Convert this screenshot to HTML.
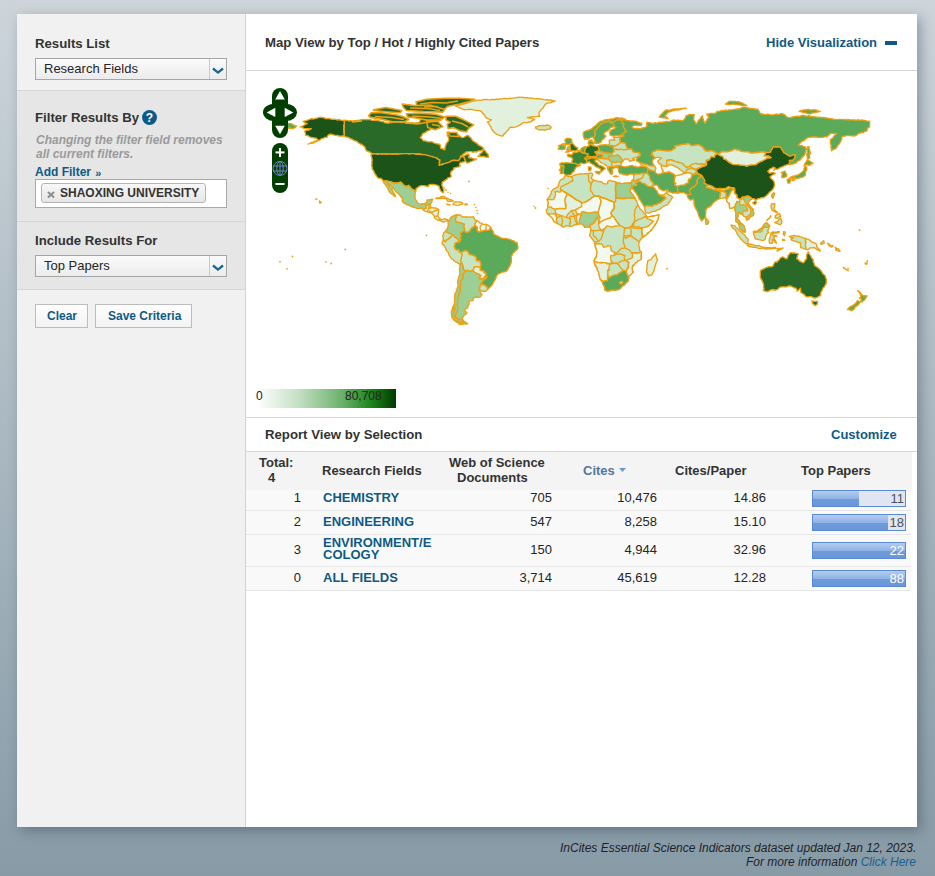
<!DOCTYPE html>
<html><head><meta charset="utf-8">
<style>
*{margin:0;padding:0;box-sizing:border-box}
html,body{width:935px;height:876px;overflow:hidden}
body{font-family:"Liberation Sans",sans-serif;background:linear-gradient(#cdd5db,#879ba7);position:relative;color:#333}
div,span{position:absolute}
.t{white-space:nowrap}
.b13{font-size:13px;line-height:13px;font-weight:bold}
.h10{font-size:13.2px!important}
.n13{font-size:13px;line-height:13px;color:#252525}
.b12{font-size:12px;line-height:12px;font-weight:bold}
.n12{font-size:12px;line-height:12px}
.blue{color:#0f5a85}
.sel{width:192px;height:22px;border:1px solid #a6a6a6;background:linear-gradient(#fafafa,#ececec)}
.sel i{position:absolute;left:173px;top:0;width:1px;height:20px;background:#c9c9c9}
.btn{height:24px;border:1px solid #bcbcbc;background:linear-gradient(#fff,#f2f2f2)}
.hl{height:1px;background:#d6d6d6}
.num{text-align:right}
.bar{left:812px;width:94px;height:17px;border:1px solid #5a8ad0;background:#dfe6f1;overflow:hidden}
.bar b{position:absolute;left:0;top:0;height:15px;background:linear-gradient(#b4cdf0 0%,#8fb3e6 50%,#6f9bdc 52%,#6a97d9 100%)}
.bar span{right:1px;top:1px;font-size:13px;line-height:13px}
</style></head><body>
<!-- panel shadow & base -->
<div style="left:17px;top:14px;width:900px;height:813px;background:#fff;box-shadow:4px 4px 12px rgba(35,50,60,.36)"></div>
<!-- sidebar -->
<div style="left:17px;top:14px;width:228px;height:813px;background:#f1f1f1"></div>
<div style="left:245px;top:14px;width:1px;height:813px;background:#d2d2d2"></div>
<div style="left:17px;top:91px;width:228px;height:199px;background:#e6e6e6"></div>
<div class="hl" style="left:17px;top:90px;width:228px"></div>
<div class="hl" style="left:17px;top:221px;width:228px"></div>
<div class="hl" style="left:17px;top:289px;width:228px"></div>

<span class="t b13 h10" style="left:35px;top:37px">Results List</span>
<div class="sel" style="left:35px;top:58px"><i></i>
  <svg style="position:absolute;left:176px;top:7px" width="12" height="9" viewBox="0 0 12 9"><path d="M1 2.5 L6 6.6 L11 2.5" fill="none" stroke="#166a96" stroke-width="2.3"/></svg>
</div>
<span class="t n13" style="left:44px;top:62px">Research Fields</span>

<span class="t b13 h10" style="left:35px;top:111px">Filter Results By</span>
<div style="left:142px;top:110px;width:15px;height:15px;border-radius:50%;background:#0d5a88"></div>
<span class="t b12" style="left:145px;top:112px;color:#fff;width:9px;text-align:center">?</span>
<span class="t b12" style="left:36px;top:134px;color:#9a9a9a;font-style:italic">Changing the filter field removes</span>
<span class="t b12" style="left:36px;top:148px;color:#9a9a9a;font-style:italic">all current filters.</span>
<span class="t b12 blue" style="left:35px;top:166px">Add Filter <span style="position:relative;left:1px;top:1px;font-size:11px">»</span></span>
<div style="left:35px;top:179px;width:192px;height:29px;border:1px solid #a9a9a9;background:#fff"></div>
<div style="left:41px;top:183px;width:165px;height:20px;border:1px solid #b5b5b5;border-radius:3px;background:linear-gradient(#f7f7f7,#e6e6e6)"></div>
<svg style="position:absolute;left:46px;top:190px" width="10" height="9"><path d="M1.9 1.9 L8.1 7.4 M8.1 1.9 L1.9 7.4" stroke="#8c8c8c" stroke-width="2"/></svg>
<span class="t b12" style="left:60px;top:187px;color:#333">SHAOXING UNIVERSITY</span>

<span class="t b13 h10" style="left:35px;top:234px">Include Results For</span>
<div class="sel" style="left:35px;top:255px"><i></i>
  <svg style="position:absolute;left:176px;top:7px" width="12" height="9" viewBox="0 0 12 9"><path d="M1 2.5 L6 6.6 L11 2.5" fill="none" stroke="#166a96" stroke-width="2.3"/></svg>
</div>
<span class="t n13" style="left:44px;top:259px">Top Papers</span>

<div class="btn" style="left:35px;top:304px;width:53px"></div>
<span class="t b12 blue" style="left:47px;top:310px">Clear</span>
<div class="btn" style="left:95px;top:304px;width:97px"></div>
<span class="t b12 blue" style="left:108px;top:310px">Save Criteria</span>

<!-- right header -->
<span class="t b13" style="left:265px;top:36px;font-size:13.2px">Map View by Top / Hot / Highly Cited Papers</span>
<span class="t b13 blue" style="left:766px;top:36px">Hide Visualization</span>
<div style="left:885px;top:41px;width:12px;height:4px;background:#0f5a85"></div>
<div class="hl" style="left:246px;top:70px;width:671px"></div>

<!-- MAP -->
<div id="map" style="left:246px;top:71px;width:671px;height:346px">
<svg width="671" height="346" viewBox="0 0 671 346" style="position:absolute;left:0;top:0"><g stroke="#eea010" stroke-width="1.35" stroke-linejoin="round">
<path fill="#e2f1de" d="M209.4 35.0L211.0 34.5L212.6 33.9L214.3 34.0L215.9 33.1L217.6 33.1L219.2 32.5L220.9 32.2L222.4 31.3L224.1 31.2L225.6 30.2L227.4 30.1L229.0 29.8L230.6 29.3L232.3 29.1L233.9 29.2L235.6 29.4L237.2 28.5L238.9 28.6L240.5 28.3L242.1 28.7L243.8 28.9L245.4 28.5L247.0 28.3L248.7 28.8L250.3 27.9L252.0 28.6L253.6 28.0L255.2 28.1L256.8 27.7L258.5 27.5L260.1 27.5L261.8 27.8L263.4 27.1L265.1 27.3L266.7 27.2L268.3 26.8L270.0 26.8L271.6 26.3L273.2 26.1L274.9 26.3L276.5 26.2L278.1 26.8L279.8 26.7L281.4 26.7L283.1 27.1L284.7 27.1L286.4 27.1L288.0 27.7L289.6 27.8L291.3 27.5L292.9 27.9L294.5 28.0L296.2 28.1L297.8 28.7L299.4 28.8L301.1 28.6L302.7 29.4L304.4 28.8L306.0 29.3L307.6 29.8L309.3 29.8L307.7 30.6L306.0 30.9L304.5 31.8L302.7 31.8L301.0 32.3L299.4 33.1L298.1 35.1L297.0 37.2L295.4 38.3L294.4 40.0L292.9 41.2L293.1 43.3L293.7 45.3L291.9 45.4L290.2 45.6L288.4 45.9L286.7 45.7L284.9 45.8L283.2 46.3L281.4 46.5L283.2 47.1L285.2 47.0L286.9 48.0L288.8 48.3L287.4 49.1L285.8 49.8L284.7 51.1L283.0 50.9L281.4 51.6L279.8 51.7L278.1 51.6L276.5 51.9L275.1 53.3L273.3 54.1L271.6 55.2L270.0 55.8L268.4 56.2L266.8 56.5L265.0 56.2L263.4 56.8L262.6 58.4L261.4 59.7L260.1 60.9L259.1 62.3L257.7 63.4L256.9 65.0L254.8 64.9L252.8 64.2L251.1 63.4L249.5 62.5L248.3 61.3L247.0 60.1L245.4 57.6L244.9 55.8L243.8 54.3L242.8 52.5L241.3 51.1L243.5 50.1L245.4 48.6L243.7 48.3L242.1 47.6L240.5 47.0L239.3 45.7L238.6 44.0L237.2 42.9L235.9 41.0L234.0 39.6L232.3 39.7L230.6 39.4L229.0 39.2L227.4 38.9L225.8 38.5L224.1 38.5L222.5 38.4L220.9 38.7L219.2 38.9L217.6 38.5L215.9 37.8L214.3 37.1L212.7 36.3L211.1 35.6Z"/>
<path fill="#c6e4c1" d="M289.6 56.0L291.4 55.6L292.9 54.5L294.5 54.6L296.2 54.5L297.8 54.5L299.4 54.6L301.1 54.0L302.7 54.3L305.2 56.0L304.3 57.9L302.3 58.1L300.5 58.7L298.6 59.4L296.7 58.9L294.8 58.7L292.9 58.8L291.2 58.0L289.6 57.1Z"/>
<path fill="#2a6a28" d="M98.1 49.3L99.7 49.4L101.4 49.3L103.0 50.0L104.7 49.7L106.3 50.2L107.9 49.7L109.5 49.6L111.1 49.3L112.8 49.3L114.4 48.8L116.0 48.6L117.7 48.5L119.4 48.6L121.0 48.4L122.6 48.7L124.3 48.5L125.9 49.4L127.5 49.3L129.2 49.0L130.8 49.4L132.5 49.6L134.1 50.1L135.8 50.5L137.5 50.7L138.9 51.8L140.6 51.9L142.3 52.2L143.9 51.6L145.6 51.5L147.2 51.0L148.8 50.9L150.5 51.0L152.1 51.1L153.8 51.0L155.4 51.6L157.0 51.1L158.7 51.1L160.3 52.0L161.9 51.8L163.6 51.6L165.2 52.0L166.9 51.7L168.5 52.2L170.1 51.9L171.8 51.9L173.4 51.1L174.2 49.5L174.6 47.8L175.0 46.2L176.8 47.0L178.4 48.0L180.1 48.8L181.4 50.3L183.2 51.1L184.9 50.5L186.6 50.2L188.1 49.4L189.7 49.0L191.4 48.9L192.7 50.6L193.3 52.7L194.7 54.3L193.0 53.9L191.4 54.0L189.8 54.1L188.1 54.3L186.8 55.4L185.8 56.7L184.8 58.1L183.3 59.2L181.6 59.9L180.0 60.9L178.5 62.0L176.7 62.5L175.8 64.8L174.2 66.6L176.0 68.1L177.5 69.9L179.3 69.9L181.1 70.5L183.0 70.9L184.8 70.7L186.7 71.2L188.3 72.1L190.1 72.6L191.9 73.1L193.8 73.2L194.4 75.2L194.7 77.3L196.8 77.8L198.8 78.9L198.9 77.2L199.3 75.6L199.9 74.0L200.4 72.4L201.5 71.2L202.4 69.9L202.9 68.3L202.3 66.1L201.2 64.2L201.6 62.5L202.0 60.9L203.8 61.4L205.6 61.8L207.5 61.5L209.2 62.3L211.0 62.5L212.4 64.2L214.1 65.4L215.9 66.6L217.7 66.3L219.2 65.5L220.8 64.7L222.5 64.5L223.4 65.9L224.9 66.9L225.7 68.4L226.8 69.8L228.2 70.7L229.7 71.6L231.2 72.6L232.4 74.0L234.0 74.8L235.6 75.6L236.9 76.7L237.7 78.1L236.1 79.1L234.3 79.8L232.3 79.9L230.7 81.0L228.9 80.7L227.1 81.3L225.4 80.7L223.6 80.6L221.8 80.9L220.0 81.0L218.7 82.2L217.1 83.2L215.9 84.6L214.3 85.4L215.8 84.5L217.7 84.9L219.3 84.1L220.9 83.5L222.5 83.0L223.3 84.6L222.5 86.3L224.0 87.0L225.8 87.0L227.3 87.8L229.0 87.9L230.7 88.2L228.9 88.6L227.5 89.7L225.8 90.3L224.2 90.9L222.6 91.6L220.9 92.0L219.4 89.9L218.7 88.0L217.9 86.1L215.6 85.6L214.8 87.0L213.7 88.3L212.7 89.5L210.7 89.9L208.6 89.2L206.6 89.5L205.2 90.5L203.7 91.2L201.6 91.8L199.6 92.3L197.9 92.8L196.2 93.0L194.7 94.0L193.0 94.4L193.7 92.7L193.6 90.8L193.8 89.0L192.2 88.0L190.6 87.1L188.9 86.6L187.2 86.5L185.6 85.7L183.9 85.4L182.4 84.6L180.4 84.7L178.7 83.7L176.7 83.9L174.9 83.3L173.1 83.0L171.4 82.8L169.8 82.9L168.1 83.1L166.5 83.0L164.8 82.9L163.2 82.7L161.6 83.3L159.9 82.9L158.3 83.2L156.6 83.2L155.0 82.7L153.3 83.0L151.7 82.9L150.1 82.8L148.4 82.6L146.8 83.0L145.1 82.9L143.5 83.0L141.8 83.0L140.2 82.8L138.6 83.0L136.9 83.0L135.3 83.0L133.6 82.6L132.0 82.8L130.3 82.6L128.7 82.6L127.1 83.0L125.6 82.4L124.3 81.3L122.2 80.5L120.2 79.7L119.4 77.3L118.6 75.8L117.4 74.7L116.1 73.7L114.3 73.0L112.6 72.0L111.2 70.7L109.5 69.9L107.7 69.4L106.3 68.3L104.1 67.5L102.2 66.3L100.0 66.0L98.1 65.0L98.2 63.2L98.3 61.5L98.4 59.7L97.8 58.0L98.3 56.2L98.2 54.5L97.8 52.8L98.4 51.0Z"/>
<path fill="#2a6a28" d="M231.8 85.3L233.4 84.3L234.1 82.5L235.9 81.6L236.7 80.0L238.0 78.7L239.4 80.1L240.5 81.9L242.1 83.0L242.1 84.7L242.6 86.3L240.8 86.3L239.0 85.8L237.2 85.4L235.4 85.4L233.6 85.5Z"/>
<path fill="#1b5319" d="M98.1 49.3L96.4 49.4L94.7 49.1L93.0 48.5L91.3 49.0L89.6 48.3L87.9 48.2L86.2 48.4L84.5 47.9L82.9 47.5L81.2 47.4L79.4 47.6L77.8 46.6L76.1 46.6L74.4 46.2L72.7 46.5L71.0 47.2L69.1 47.4L67.4 48.0L65.5 47.7L63.7 48.3L62.1 49.0L60.5 49.7L58.8 49.9L57.2 50.4L59.0 51.9L61.3 52.7L59.5 53.3L58.0 54.3L56.0 55.3L53.9 55.8L55.9 56.1L57.6 57.4L59.6 57.6L61.5 57.7L63.4 57.8L65.3 57.6L63.8 58.6L62.2 59.2L60.4 59.3L58.8 60.1L59.3 62.1L59.6 64.2L61.8 64.6L63.7 65.8L65.3 66.5L67.0 66.6L68.6 67.0L70.3 67.1L71.9 69.1L70.4 70.1L68.5 70.1L67.1 71.5L65.2 71.5L63.7 72.5L62.1 73.2L63.7 72.5L65.4 72.2L67.1 72.1L68.6 71.0L70.3 70.7L71.7 69.6L73.5 69.1L75.1 68.0L76.8 67.4L78.8 66.5L80.9 66.3L81.9 64.6L83.3 63.3L85.1 63.2L86.7 63.6L88.3 64.2L89.9 64.3L91.6 64.5L93.2 65.0L94.8 65.2L96.4 64.8L98.1 65.0L98.1 63.2L97.8 61.5L97.9 59.7L97.6 58.0L97.9 56.2L97.6 54.5L98.3 52.8L98.1 51.0Z"/>
<path fill="#1b5319" d="M127.1 83.0L128.7 82.7L130.3 83.0L132.0 83.4L133.6 82.6L135.3 83.3L136.9 82.9L138.6 83.0L140.2 83.3L141.8 82.9L143.5 83.0L145.1 83.2L146.8 83.4L148.4 82.8L150.1 83.3L151.7 83.2L153.3 83.1L155.0 82.9L156.6 82.8L158.3 82.6L159.9 82.7L161.6 82.6L163.2 83.2L164.8 82.8L166.5 82.7L168.1 82.6L169.8 83.3L171.4 83.3L173.1 83.0L174.9 83.5L176.8 83.4L178.7 83.7L180.6 84.1L182.4 84.6L184.0 85.1L185.8 85.3L187.3 86.1L189.0 86.4L190.6 87.1L192.0 88.4L193.8 89.0L193.2 90.8L193.3 92.6L193.0 94.4L194.6 93.7L196.4 93.8L197.9 92.7L199.6 92.3L201.6 91.6L203.7 91.2L204.9 90.0L206.6 89.5L208.6 89.4L210.7 89.5L212.7 89.5L213.7 88.2L214.4 86.8L215.6 85.6L217.9 86.1L218.6 88.0L219.4 89.9L217.8 90.8L216.1 91.2L214.3 91.5L213.3 93.5L214.3 94.9L212.8 95.9L211.0 96.1L209.4 96.6L207.8 96.9L207.8 98.5L205.3 100.2L204.5 102.6L205.3 105.4L203.8 106.5L202.0 106.7L201.1 108.1L199.6 108.9L198.0 110.1L196.3 111.1L195.8 114.1L196.7 115.6L197.1 117.4L197.9 119.8L197.1 121.9L195.0 120.3L194.3 118.8L193.5 117.4L193.0 115.2L190.6 114.1L188.9 113.7L187.3 113.4L185.2 113.3L183.2 113.6L182.4 115.7L180.8 115.2L179.1 114.9L177.1 114.6L175.0 114.7L173.2 115.3L171.8 116.6L170.1 117.4L170.0 119.0L169.6 120.6L168.1 119.0L166.0 118.2L164.7 117.1L164.0 115.5L162.7 114.4L160.3 115.7L157.8 114.4L156.3 112.7L154.6 111.1L151.8 112.0L149.5 112.4L147.2 112.0L145.7 111.2L144.2 110.6L142.6 110.4L141.0 110.0L139.1 109.8L137.2 110.0L136.3 108.6L134.9 107.5L133.1 107.4L131.5 106.6L130.5 105.0L129.4 103.4L128.4 101.8L127.6 99.8L126.2 98.0L126.2 96.2L125.6 94.4L126.0 92.7L125.8 90.9L126.2 89.2L125.9 87.4L125.5 85.6L124.8 84.0Z"/>
<path fill="#9ccf94" d="M137.2 110.0L139.1 110.2L141.0 110.0L142.6 110.3L144.2 110.6L145.7 111.2L147.2 112.0L149.5 111.8L151.8 112.0L154.6 111.1L156.4 112.5L157.8 114.4L160.3 115.7L162.7 114.4L163.6 115.9L164.9 117.0L166.0 118.2L167.8 119.5L169.6 120.6L169.2 122.3L169.0 123.9L169.0 126.0L169.3 128.0L170.5 130.0L171.7 132.1L174.2 133.4L176.2 132.6L178.3 132.8L180.8 131.3L181.1 128.8L182.9 128.8L184.7 128.5L186.5 128.0L186.1 129.6L185.7 131.3L184.4 132.9L182.9 134.1L179.9 134.1L179.9 135.0L180.8 137.0L179.3 137.8L178.0 138.6L178.0 139.5L176.6 138.1L175.0 137.0L173.0 137.6L170.9 137.5L169.0 136.6L166.8 136.0L164.7 135.2L162.7 134.1L160.7 133.5L158.8 132.4L157.0 131.3L156.2 129.6L156.7 127.5L154.6 125.2L153.1 123.4L151.3 121.8L149.7 120.5L148.7 118.8L147.2 117.5L146.3 115.7L144.7 114.4L143.5 113.4L142.2 112.4L141.0 111.3L142.3 114.1L143.9 115.7L145.6 117.4L146.2 119.1L147.0 120.7L147.9 122.3L148.8 123.9L149.6 125.5L148.3 125.2L146.9 123.8L145.2 122.6L143.8 121.4L142.8 119.8L142.0 118.2L141.5 116.5L140.2 115.3L139.5 113.7L138.2 112.5Z"/>
<path fill="#e2f1de" d="M178.0 139.5L178.0 138.6L179.3 137.7L180.8 137.0L179.9 135.0L179.9 134.1L182.9 134.1L184.4 132.9L184.4 134.6L184.5 136.2L183.4 137.2L185.7 136.7L188.1 137.0L189.9 137.0L191.4 137.8L192.7 138.6L192.7 140.7L192.2 142.7L191.9 145.2L193.0 146.8L195.5 148.8L197.2 148.4L198.8 147.6L200.3 148.5L202.0 149.0L202.4 150.3L200.6 149.8L198.9 150.3L197.4 151.1L194.7 149.8L191.9 149.1L190.1 148.2L188.6 147.0L188.3 145.2L187.0 143.6L185.7 142.1L184.0 141.6L182.4 141.1L180.7 140.7L179.1 140.3Z"/>
<path fill="#e2f1de" d="M189.8 127.5L191.3 126.7L193.1 126.9L194.7 126.0L196.2 125.4L197.9 125.4L199.8 126.8L202.0 127.5L203.7 128.7L205.8 128.9L207.4 130.1L205.6 130.3L203.8 130.2L202.0 130.6L200.4 128.0L198.8 127.3L197.1 127.4L195.5 127.0L193.9 127.6L192.2 127.7Z"/>
<path fill="#f2f9f0" d="M206.9 133.1L208.2 131.7L209.7 130.6L212.0 131.2L214.3 131.0L215.8 131.6L217.1 132.8L214.9 133.4L212.7 134.2L210.8 134.3L209.1 133.8L207.3 133.6Z"/>
<path fill="#e2f1de" d="M200.7 133.1L202.3 133.7L204.0 133.6L202.9 134.1Z"/>
<path fill="#e2f1de" d="M218.9 132.9L221.5 133.1L221.2 133.7L218.9 133.7Z"/>
<path fill="#1b5319" d="M73.5 130.0L75.2 131.6L73.7 132.1L73.5 130.8Z"/>
<path fill="#1b5319" d="M69.8 127.8L70.9 128.3L70.3 128.5Z"/>
<path fill="#9ccf94" d="M202.4 150.3L203.7 148.8L204.2 147.2L205.3 146.0L207.8 144.7L210.5 143.7L212.2 144.2L210.5 145.0L209.7 146.5L209.4 148.1L210.2 151.1L212.3 151.4L214.3 151.7L216.3 152.7L218.4 153.1L217.9 155.8L218.1 157.8L218.7 159.8L217.2 160.8L215.5 161.4L214.3 162.2L215.1 164.8L214.5 166.6L214.6 168.4L214.3 170.2L212.7 169.5L211.3 168.5L210.2 167.1L208.7 165.9L207.2 164.7L205.8 163.4L203.9 162.8L202.0 161.9L199.6 160.3L200.3 158.7L201.5 157.5L201.8 155.8L202.4 154.2L202.0 152.1Z"/>
<path fill="#c6e4c1" d="M199.6 160.3L202.0 161.9L204.0 162.5L205.8 163.4L205.3 165.7L203.6 166.4L202.5 168.1L200.7 168.8L199.6 171.1L197.4 168.9L197.2 166.8L196.5 164.8L197.5 163.3L197.9 161.6Z"/>
<path fill="#c6e4c1" d="M205.8 163.4L207.5 164.4L208.5 166.2L210.2 167.1L211.5 168.3L212.7 169.5L214.3 170.2L212.8 170.9L211.2 171.3L209.6 171.7L209.0 173.6L208.3 175.5L208.9 177.3L210.2 178.8L213.3 178.8L213.3 181.2L215.1 181.2L216.4 183.7L215.9 185.3L215.7 187.0L215.1 188.6L215.4 190.2L215.5 191.8L213.8 193.2L212.3 192.4L211.0 191.4L209.4 190.8L208.0 189.9L206.9 188.4L205.3 187.8L204.0 185.3L202.9 183.8L202.5 181.8L201.2 180.4L200.3 179.1L199.6 177.6L199.0 176.1L198.3 174.7L196.9 173.6L196.0 172.2L196.6 170.5L197.4 168.9L199.6 171.1L200.7 168.8L202.5 168.1L204.0 167.0L205.3 165.7Z"/>
<path fill="#c6e4c1" d="M210.5 145.0L212.2 144.2L214.3 143.9L215.4 145.2L216.8 146.0L218.8 146.0L220.9 145.8L222.5 146.2L224.1 145.8L225.8 146.2L227.4 145.7L228.2 147.4L229.0 149.1L231.0 149.6L229.9 151.7L228.7 153.2L229.5 154.7L227.7 155.5L226.1 156.7L224.1 159.1L223.8 160.7L221.6 161.4L219.4 161.2L218.7 159.8L218.5 157.8L217.9 155.8L218.4 153.1L216.3 152.4L214.3 151.7L212.3 151.2L210.2 151.1L209.4 148.1L210.1 146.6Z"/>
<path fill="#f2f9f0" d="M231.0 149.6L232.6 150.7L234.0 152.1L235.7 152.2L237.1 153.4L238.9 153.5L240.6 153.5L242.1 154.2L243.4 155.2L244.6 156.3L243.9 157.9L243.0 159.4L241.3 159.6L239.7 159.4L238.0 159.6L236.4 160.1L234.6 160.2L233.1 161.1L231.0 159.6L230.9 157.9L231.2 156.2L229.5 154.7L228.7 153.2L229.9 151.7Z"/>
<path fill="#5aaa5a" d="M244.6 156.3L245.7 158.4L247.0 160.3L247.9 163.2L250.3 164.5L252.3 165.3L254.1 166.4L256.1 167.3L258.0 167.4L259.9 167.4L261.8 167.9L263.9 168.3L265.9 169.3L267.7 169.8L269.2 171.2L271.1 171.7L271.5 173.6L271.9 175.5L271.8 177.2L271.1 178.8L269.5 179.7L268.3 181.2L266.9 182.3L266.3 184.0L265.2 185.3L265.5 186.9L265.4 188.6L265.5 190.2L265.1 191.8L264.4 193.5L263.7 195.3L262.6 196.8L261.7 198.6L260.5 200.2L258.3 200.9L256.1 201.2L254.4 202.1L252.6 202.8L251.1 204.1L250.1 206.1L249.5 208.2L247.9 210.7L246.7 212.8L245.4 214.8L244.2 216.0L242.8 217.2L241.5 218.4L241.3 216.4L239.6 215.3L238.0 213.9L236.3 213.4L234.6 212.6L235.5 211.1L236.7 209.9L238.0 208.7L239.8 207.6L241.0 205.9L239.5 205.1L240.0 202.5L238.0 201.7L237.6 199.7L235.8 199.8L234.1 199.2L234.0 197.6L234.0 195.9L234.5 194.3L234.8 192.7L233.5 189.9L230.4 189.9L230.4 187.8L229.9 185.8L227.4 184.5L225.3 184.3L223.3 183.7L222.0 181.0L219.9 179.4L218.4 180.2L216.8 180.8L215.1 181.2L213.3 181.2L213.3 178.8L210.2 178.8L209.2 177.2L208.3 175.5L208.9 173.6L209.6 171.7L211.3 171.6L212.8 171.0L214.3 170.2L214.9 168.5L214.4 166.6L215.1 164.8L214.3 162.2L215.5 161.4L216.9 160.2L218.7 159.8L219.4 161.2L221.6 161.2L223.8 160.7L224.1 159.1L226.1 156.7L228.0 156.0L229.5 154.7L231.2 156.2L231.1 157.9L231.0 159.6L233.1 161.1L234.8 160.7L236.4 160.1L238.0 159.3L239.7 159.4L241.3 159.3L243.0 159.4L244.1 158.1Z"/>
<path fill="#c6e4c1" d="M215.1 181.2L216.4 183.7L215.7 185.2L215.3 186.9L215.1 188.6L214.9 190.3L215.5 191.8L216.8 194.3L217.2 196.1L217.3 197.9L218.5 199.0L219.2 200.5L221.3 199.2L223.6 200.5L225.2 199.8L226.9 199.7L227.6 197.8L228.2 195.9L230.0 196.0L231.8 196.1L233.6 195.6L234.0 195.9L234.6 194.4L234.8 192.7L233.5 189.9L230.4 189.9L230.2 187.8L229.9 185.8L227.4 184.5L225.4 183.8L223.3 183.7L222.0 181.0L219.9 179.4L218.3 180.0L216.7 180.6Z"/>
<path fill="#e2f1de" d="M233.6 195.6L231.9 196.1L230.0 195.6L228.2 195.9L227.8 197.9L226.9 199.7L228.6 201.4L230.7 202.5L233.1 203.3L234.8 204.9L233.8 206.3L233.0 207.9L235.1 207.9L237.2 208.2L238.1 206.5L239.5 205.1L240.0 202.5L238.0 201.7L237.6 199.7L235.8 199.7L234.1 199.2L234.2 197.6L234.0 195.9Z"/>
<path fill="#c6e4c1" d="M241.5 218.4L241.3 216.4L239.8 215.0L238.0 213.9L236.2 213.6L234.6 212.6L234.5 214.6L233.6 216.4L233.3 218.0L234.8 219.2L236.4 220.3L239.2 220.5Z"/>
<path fill="#9ccf94" d="M213.8 193.2L215.5 191.8L216.8 194.3L216.9 196.1L217.3 197.9L218.3 199.2L219.2 200.5L218.2 202.1L216.8 203.3L216.8 205.4L217.1 207.4L216.4 208.9L215.0 209.9L214.9 211.8L214.6 213.7L214.3 215.6L213.9 217.2L214.2 218.9L214.3 220.5L213.2 222.4L212.7 224.6L212.4 226.5L212.3 228.4L211.7 230.3L211.9 232.0L211.3 233.6L211.7 235.2L211.6 236.9L211.9 238.5L211.2 240.6L210.2 242.6L208.9 245.0L210.3 246.0L211.0 247.5L213.0 247.9L214.9 248.5L216.9 248.8L216.8 250.9L216.6 253.1L214.3 253.6L212.8 252.8L211.7 251.6L210.2 250.8L209.1 249.1L207.3 248.2L206.1 246.7L205.5 245.1L205.6 243.4L205.4 241.8L205.3 240.1L206.3 238.3L206.7 236.2L207.8 234.4L208.4 232.4L208.6 230.3L208.8 228.7L208.6 227.0L208.6 225.4L208.9 223.3L209.7 221.3L210.8 219.6L211.0 217.4L211.9 215.6L212.1 213.9L211.6 212.3L211.6 210.7L211.9 209.0L212.6 207.5L212.8 205.7L213.5 204.1L214.0 202.5L213.7 200.9L213.5 199.2L213.6 197.6L214.0 195.9Z"/>
<path fill="#9ccf94" d="M219.2 200.5L221.3 199.2L223.6 200.5L225.3 200.0L226.9 199.7L228.7 201.2L230.7 202.5L233.1 203.3L234.8 204.9L233.5 206.2L233.0 207.9L235.1 207.7L237.2 208.2L238.3 206.6L239.5 205.1L241.0 205.9L239.7 207.5L238.0 208.7L236.6 209.7L236.0 211.5L234.6 212.6L234.5 214.6L233.6 216.4L233.3 218.0L233.1 219.3L234.5 220.8L235.1 222.6L236.1 223.6L234.3 225.9L232.6 226.3L230.8 226.1L229.1 226.4L227.4 227.0L226.9 229.7L224.7 229.8L222.5 230.3L223.3 232.8L222.1 234.7L221.7 236.9L219.8 237.8L218.4 239.3L219.7 240.4L220.9 241.8L219.8 243.3L218.1 244.2L217.1 245.9L215.9 248.3L216.9 248.8L215.0 248.2L212.9 248.4L211.0 247.5L210.1 246.2L208.9 245.0L210.2 242.6L210.9 240.5L211.9 238.5L211.7 236.9L211.7 235.2L211.5 233.6L211.4 232.0L211.7 230.3L211.6 228.3L212.2 226.5L212.7 224.6L213.4 222.5L214.3 220.5L214.7 218.9L214.0 217.2L214.3 215.6L214.9 213.7L214.5 211.7L215.0 209.9L215.9 208.5L217.1 207.4L217.2 205.3L216.8 203.3L218.2 202.1Z"/>
<path fill="#9ccf94" d="M216.9 249.3L216.8 251.2L216.6 253.1L218.3 252.7L220.0 253.2L221.7 252.7L220.1 251.6L218.4 250.5Z"/>
<path fill="#256e25" d="M319.6 81.2L321.8 81.1L324.0 80.4L325.8 79.8L327.6 79.8L329.4 80.0L331.2 79.4L331.7 76.9L329.4 75.6L328.1 74.0L326.3 72.2L325.5 71.9L323.7 73.5L324.0 74.8L324.0 75.8L323.8 77.1L324.5 78.7L324.0 79.2L322.0 79.4Z"/>
<path fill="#9ccf94" d="M324.0 75.8L321.9 75.8L321.2 76.8L322.0 78.6L320.4 78.6L322.2 78.4L324.0 79.1L324.5 78.7L323.8 77.1Z"/>
<path fill="#5aaa5a" d="M326.3 72.2L325.8 70.6L325.5 68.9L326.0 68.9L324.7 67.8L323.2 67.3L320.7 67.3L318.8 69.1L319.7 71.0L319.1 72.7L320.9 73.5L323.7 73.5L325.5 71.9Z"/>
<path fill="#9ccf94" d="M319.9 73.7L319.1 74.6L316.6 74.5L317.1 72.7Z"/>
<path fill="#5aaa5a" d="M319.1 77.9L319.1 75.0L316.6 74.5L317.1 72.7L315.0 74.0L312.5 74.6L313.3 76.4L312.0 78.1L315.0 78.7L317.1 78.6Z"/>
<path fill="#388838" d="M326.0 92.2L326.0 89.9L326.9 87.9L325.3 86.3L323.3 85.9L321.5 84.8L321.4 83.6L323.0 83.2L324.7 83.9L326.3 83.5L326.8 81.8L329.0 81.3L331.4 81.2L333.0 79.5L334.3 80.7L335.8 81.5L338.4 82.2L340.3 82.9L342.3 83.0L341.3 85.3L340.1 86.5L338.7 87.4L340.4 89.0L341.2 91.5L338.7 92.6L337.1 92.7L335.5 92.0L333.8 92.3L334.0 93.8L332.4 93.4L330.7 93.3L329.2 92.6L327.5 92.6Z"/>
<path fill="#388838" d="M326.0 92.2L327.6 92.3L329.3 92.4L330.7 93.4L332.3 93.8L334.0 93.8L334.1 94.6L332.1 95.2L330.2 96.1L328.9 98.4L327.9 100.5L326.4 101.5L325.5 103.1L323.8 103.9L321.9 104.1L320.1 104.3L318.4 103.0L316.8 102.3L317.4 99.5L317.4 98.2L317.5 96.4L317.6 94.6L316.0 94.2L314.3 94.6L313.7 92.8L315.8 91.7L317.5 92.2L319.2 91.7L320.9 91.7L322.6 91.9L324.3 92.1Z"/>
<path fill="#5aaa5a" d="M314.3 94.6L316.0 95.0L317.6 94.6L317.8 96.4L317.4 98.2L317.4 99.5L316.8 102.3L314.3 102.6L314.5 99.8L313.3 99.4L314.3 97.8L314.7 96.1Z"/>
<path fill="#388838" d="M341.2 91.5L340.4 89.0L340.0 88.1L342.1 87.8L344.1 87.4L346.1 86.6L347.8 87.0L349.6 87.0L351.3 87.1L351.3 88.6L349.0 89.2L349.2 90.8L351.2 92.0L353.0 94.3L355.4 94.8L357.4 96.0L359.2 97.6L356.7 99.4L355.3 101.0L354.8 99.4L354.6 97.7L352.6 96.9L350.9 96.2L349.4 95.3L347.9 93.9L346.1 93.0L344.4 92.0L343.3 90.5Z"/>
<path fill="#388838" d="M349.2 100.8L350.9 100.4L352.7 100.8L354.4 100.5L353.6 103.1L352.0 102.6L350.5 101.9Z"/>
<path fill="#388838" d="M342.3 95.9L344.9 96.1L345.2 97.8L344.6 99.4L342.7 99.4L342.5 97.6Z"/>
<path fill="#5aaa5a" d="M333.0 79.5L334.5 79.1L335.4 77.6L336.6 76.4L338.4 75.8L340.4 75.6L339.9 77.3L338.6 79.7L338.9 81.2L339.4 82.2L338.4 82.2L335.8 81.5L334.6 80.2Z"/>
<path fill="#256e25" d="M338.6 79.7L338.9 81.2L339.4 82.2L342.3 83.0L341.3 85.3L343.4 85.9L345.6 85.8L347.9 86.0L350.2 85.4L351.5 83.5L350.1 82.4L349.0 81.0L351.0 80.1L353.1 79.9L352.8 77.3L352.1 75.0L350.4 75.3L348.7 74.9L346.9 74.8L345.1 73.5L343.0 73.3L343.1 75.0L340.4 75.6L339.9 77.3Z"/>
<path fill="#5aaa5a" d="M338.7 87.4L340.2 86.5L341.3 85.3L343.5 85.5L345.6 85.8L347.9 85.4L350.2 85.4L351.5 83.5L353.2 83.5L354.9 83.7L356.6 83.6L356.9 84.6L355.9 87.1L353.6 86.9L351.3 87.1L349.6 86.7L347.9 86.4L346.1 86.6L344.0 86.9L342.1 87.9L340.0 88.1Z"/>
<path fill="#5aaa5a" d="M342.2 72.3L343.0 69.7L344.6 69.5L346.1 68.7L346.1 70.7L347.8 71.3L349.4 72.2L346.9 73.2L345.1 73.5L343.0 73.3Z"/>
<path fill="#5aaa5a" d="M337.9 66.6L337.6 65.0L337.1 63.3L337.9 60.9L339.9 60.0L342.0 59.3L344.1 58.6L346.1 57.6L347.3 56.3L348.7 55.3L350.2 54.3L351.7 52.5L353.5 51.1L355.0 50.1L356.9 50.0L358.4 48.9L360.0 48.8L361.6 48.3L363.3 48.3L364.9 47.9L366.6 48.1L368.2 47.3L369.8 47.0L371.7 46.7L373.6 47.3L375.6 47.0L377.6 47.7L379.6 48.1L377.5 48.4L375.6 49.4L373.5 49.5L371.5 48.9L369.8 49.9L368.2 50.9L366.3 50.4L364.4 50.2L362.5 50.2L360.3 50.3L358.4 51.1L356.9 52.3L355.1 52.7L354.0 54.5L352.6 56.0L351.6 57.3L350.3 58.4L348.9 59.3L348.7 61.3L349.4 63.3L348.4 65.8L347.4 66.6L346.1 66.0L344.0 67.0L342.0 68.1L340.3 67.8L338.7 68.3Z"/>
<path fill="#5aaa5a" d="M347.4 66.6L348.4 65.8L349.4 63.3L349.0 61.3L348.9 59.3L350.3 58.4L351.4 57.0L352.6 56.0L353.7 54.2L355.1 52.7L356.8 52.1L358.4 51.1L360.5 51.0L362.5 50.2L364.3 50.7L365.7 52.0L367.4 52.7L368.2 55.5L366.1 56.0L364.1 56.8L363.3 58.4L361.4 59.9L359.2 60.9L357.5 63.3L360.0 65.0L359.2 66.1L357.6 67.7L355.9 69.1L355.1 71.2L352.6 72.3L349.9 72.5L348.9 70.9L348.5 69.1Z"/>
<path fill="#5aaa5a" d="M368.2 55.5L367.4 52.7L365.6 52.1L364.0 51.3L362.5 50.2L364.4 50.6L366.3 50.8L368.2 50.9L369.7 49.7L371.5 48.9L373.6 48.7L375.6 49.4L376.4 51.9L378.0 52.7L377.2 55.2L378.1 56.7L378.8 58.4L380.5 60.6L378.9 61.3L377.6 62.6L376.0 63.4L374.4 64.2L372.5 64.7L370.4 64.4L368.5 64.9L366.6 65.1L364.1 64.0L363.7 62.0L364.1 60.1L365.3 58.9L366.9 58.4L368.4 57.7L369.8 56.8Z"/>
<path fill="#5aaa5a" d="M352.1 75.0L352.8 77.3L353.1 79.9L355.9 80.9L357.8 81.6L359.8 82.2L361.9 82.0L363.9 82.3L365.9 82.8L367.2 81.8L368.4 80.5L367.5 78.9L367.4 77.4L367.4 75.0L365.4 74.8L363.5 74.6L361.6 74.1L359.2 73.5L357.6 73.9L355.9 74.0L353.9 74.1Z"/>
<path fill="#9ccf94" d="M349.0 81.0L351.0 80.3L353.1 79.9L355.9 80.9L357.9 81.6L359.8 82.2L361.9 82.3L363.9 82.5L365.9 82.8L365.7 84.3L366.4 84.6L363.3 85.0L362.1 87.7L359.7 88.1L357.9 87.3L355.9 87.1L356.9 84.6L356.6 83.6L354.9 83.1L353.2 83.7L351.5 83.5L350.1 82.4Z"/>
<path fill="#9ccf94" d="M365.7 84.3L367.3 84.7L369.0 84.6L370.7 84.1L372.4 84.1L374.1 85.2L375.1 86.9L375.9 89.0L377.4 89.5L375.7 91.7L373.1 90.8L371.4 90.9L369.8 91.7L368.1 91.5L366.4 91.2L364.1 89.9L362.1 87.7L363.3 85.0L366.4 84.6Z"/>
<path fill="#c6e4c1" d="M351.3 88.6L351.3 87.1L353.6 87.4L355.9 87.1L357.8 87.5L359.7 88.1L362.1 87.7L364.1 89.9L366.4 91.2L365.6 94.0L365.7 95.8L362.6 95.9L362.0 98.4L361.6 96.5L360.7 94.8L359.2 93.6L356.7 92.5L355.2 91.6L353.8 90.7L352.6 89.2Z"/>
<path fill="#c6e4c1" d="M366.4 91.2L368.1 91.1L369.8 91.7L371.4 90.8L373.1 90.8L375.7 91.7L374.6 94.4L371.8 94.9L370.0 95.1L368.2 95.3L365.7 95.8L365.6 94.0Z"/>
<path fill="#5aaa5a" d="M362.0 98.4L362.6 95.9L365.7 95.8L368.2 95.3L370.0 95.2L371.8 94.9L371.5 96.4L369.3 96.5L367.4 97.4L365.9 97.7L366.6 99.5L365.7 101.0L366.9 101.2L365.7 103.4L364.1 102.6L363.4 100.5L362.1 99.4Z"/>
<path fill="#5aaa5a" d="M367.4 105.4L369.7 105.0L372.0 105.4L369.8 105.9Z"/>
<path fill="#c6e4c1" d="M367.4 77.4L367.4 75.0L369.0 74.7L370.6 74.3L372.8 72.7L374.7 71.4L377.0 71.7L379.3 72.2L380.1 74.3L381.0 76.4L382.1 78.1L379.3 78.9L376.4 78.7L374.7 78.9L373.1 78.7L371.5 78.3L369.8 78.2L367.5 78.9Z"/>
<path fill="#c6e4c1" d="M365.9 82.8L365.7 84.3L367.3 84.8L369.0 84.6L370.7 84.0L372.4 84.1L373.8 85.5L375.1 86.9L375.9 89.0L377.4 89.5L378.8 87.9L380.5 88.2L382.1 87.9L383.7 90.4L386.2 89.5L388.7 89.0L386.2 87.4L388.0 87.4L389.6 86.3L391.4 86.1L392.8 85.1L394.4 84.6L393.9 82.0L391.1 81.3L389.1 80.5L387.0 80.5L386.2 78.4L384.6 77.6L382.1 78.1L379.3 78.9L376.4 78.7L374.8 78.2L373.1 78.5L371.4 78.8L369.8 78.2L367.5 78.9L368.4 80.5L366.9 81.4Z"/>
<path fill="#c6e4c1" d="M363.3 70.7L363.4 69.1L365.7 68.7L368.7 69.4L368.2 67.8L367.4 66.3L369.2 66.1L371.1 66.4L372.9 66.0L374.7 65.8L373.9 68.3L374.0 69.9L374.7 71.4L372.8 72.7L370.6 74.3L369.1 74.9L367.4 75.0L365.8 74.4L364.0 74.6L362.5 74.0L363.6 72.8Z"/>
<path fill="#c6e4c1" d="M319.2 104.6L320.9 104.8L322.4 105.5L324.0 105.7L325.6 105.7L327.1 104.7L328.8 104.0L330.5 103.4L332.6 103.1L334.6 103.0L336.5 102.9L338.3 102.8L340.1 102.5L342.0 102.8L343.6 102.2L345.3 102.1L346.9 103.0L346.1 105.1L345.3 107.2L347.7 109.2L349.8 109.8L351.8 110.4L353.9 110.5L355.6 110.9L356.9 112.1L358.4 112.8L360.0 112.9L361.6 112.6L361.6 110.5L363.2 109.6L364.9 109.5L366.5 110.3L368.3 110.3L369.8 111.1L371.4 111.6L373.1 111.9L374.7 112.4L376.4 112.6L378.0 112.3L379.6 112.2L381.3 112.1L383.1 112.1L384.9 112.0L386.0 114.9L385.0 117.7L383.7 119.8L384.9 121.1L385.8 122.6L387.0 123.9L388.0 125.5L388.9 127.2L389.8 128.8L390.9 130.3L391.1 132.1L391.9 133.7L392.9 135.8L393.9 137.8L395.5 139.0L396.8 140.6L398.1 142.3L399.8 143.7L400.9 146.0L402.6 146.0L404.2 145.5L405.8 145.2L407.4 144.7L409.1 144.7L411.0 144.3L412.9 143.9L412.4 146.0L412.1 147.6L411.6 149.3L410.9 150.7L409.9 152.1L409.4 153.7L408.3 155.0L407.3 156.4L406.2 157.6L405.6 159.2L404.2 160.3L402.9 161.2L402.0 162.7L400.4 163.3L399.3 164.5L396.8 166.5L395.4 167.5L394.4 168.9L393.1 170.9L392.9 172.8L392.7 174.7L393.5 176.2L393.5 177.9L393.9 179.6L395.2 181.2L395.3 182.8L394.9 184.5L395.6 186.1L395.4 187.8L393.7 188.5L392.2 189.4L390.8 190.7L389.5 191.8L388.2 193.0L387.5 194.7L386.2 195.9L386.0 197.9L386.7 199.8L387.0 201.7L385.4 202.4L384.1 203.6L382.9 204.9L382.6 207.4L381.9 210.3L379.6 212.3L378.6 213.8L377.0 214.6L375.7 215.7L374.7 217.2L372.9 218.4L370.8 218.9L369.1 219.0L367.4 218.6L365.7 218.9L363.8 219.8L361.6 220.2L359.0 219.2L359.0 217.3L358.4 215.6L357.4 213.8L357.0 211.8L355.9 210.0L354.6 208.9L353.8 207.4L353.5 205.8L353.6 204.1L352.7 202.5L352.6 200.9L351.6 199.3L351.0 197.6L350.0 196.0L349.0 194.5L348.5 192.7L348.2 190.2L348.6 188.5L349.2 186.8L350.4 185.4L350.9 183.7L351.3 182.0L351.1 179.9L350.2 177.9L349.4 176.4L349.3 174.6L348.5 173.0L349.4 171.4L347.9 170.4L346.9 168.9L345.8 167.5L344.8 166.1L343.6 164.8L343.8 163.2L344.5 161.6L344.5 159.9L344.9 157.5L342.8 155.8L340.8 155.9L338.7 156.2L337.6 154.5L336.3 152.9L334.2 152.5L332.2 152.9L330.7 153.8L328.7 153.7L327.2 154.6L325.6 155.3L323.6 155.1L321.5 154.7L319.8 154.9L318.3 155.8L316.6 156.0L315.2 154.5L313.4 153.6L311.7 152.6L309.6 151.4L307.6 150.1L306.8 147.6L305.7 146.3L304.3 145.2L302.8 144.0L301.4 142.7L300.5 141.0L300.3 139.1L301.3 137.8L301.9 136.2L301.6 134.5L302.5 132.9L302.4 131.3L301.1 128.8L302.0 127.1L303.4 125.6L304.3 123.9L305.2 122.4L305.2 120.6L306.4 119.3L307.6 117.9L309.3 117.3L310.8 116.3L312.5 115.7L312.2 114.0L312.9 112.5L313.6 110.4L315.0 108.7L317.8 107.5L318.2 105.9Z"/>
<path fill="#f2f9f0" d="M301.1 128.8L302.4 131.3L302.1 132.9L302.1 134.6L301.9 136.2L303.5 136.1L305.2 136.0L306.3 137.3L308.1 137.7L309.3 139.0L310.1 137.8L311.7 137.6L313.3 138.0L315.0 137.4L316.6 137.4L318.3 137.7L319.9 137.8L319.9 136.2L319.3 134.3L319.4 132.3L319.0 130.3L319.1 128.3L319.8 126.3L320.5 124.3L321.0 122.3L319.3 121.6L317.9 120.3L316.2 119.5L314.7 118.5L314.7 120.8L312.8 121.1L311.1 120.3L309.3 120.6L309.5 122.7L309.3 124.7L308.7 126.7L307.6 128.3L306.0 128.8L304.3 128.5L302.7 128.4Z"/>
<path fill="#e2f1de" d="M309.3 139.0L309.4 141.0L310.1 142.9L311.7 143.4L313.4 143.9L315.0 144.7L316.8 144.8L318.3 145.8L320.1 146.2L321.5 143.6L322.9 142.2L324.2 140.7L325.6 139.5L327.5 139.3L329.4 138.8L331.0 138.2L332.6 137.2L334.4 136.8L335.8 135.5L336.1 133.7L335.9 131.8L334.1 131.1L332.7 129.7L330.9 129.2L329.2 128.5L328.1 127.2L326.6 126.3L325.1 125.4L323.6 124.6L322.6 123.1L321.0 122.3L320.8 124.4L319.7 126.3L319.1 128.3L318.9 130.3L319.8 132.2L320.0 134.2L319.9 136.2L319.9 137.8L318.3 137.7L316.6 137.8L315.0 137.7L313.3 137.5L311.7 138.1L310.1 137.8Z"/>
<path fill="#f2f9f0" d="M329.4 138.8L331.0 138.2L332.5 137.1L334.1 136.3L335.8 135.5L335.5 133.6L335.9 131.8L338.4 131.3L340.1 130.8L341.5 129.9L343.0 129.0L344.5 128.0L345.5 126.6L347.3 126.1L348.4 124.7L350.0 125.2L351.8 125.2L353.5 125.5L354.1 127.7L355.1 129.6L354.7 131.7L354.3 133.7L353.5 136.2L353.1 137.9L352.7 139.6L351.8 141.1L349.4 141.1L347.5 141.7L345.6 142.3L343.6 142.2L341.6 141.9L339.5 141.3L337.6 141.0L335.6 141.1L334.8 144.0L332.2 142.7L330.2 141.9L330.0 140.3Z"/>
<path fill="#f2f9f0" d="M353.5 125.5L355.0 126.5L356.7 127.0L358.4 127.3L360.0 128.1L361.7 128.7L363.2 129.6L364.9 130.0L366.6 130.4L368.2 131.3L368.1 133.4L367.8 135.4L368.2 137.5L367.2 139.1L365.7 140.3L364.9 142.4L366.2 144.9L364.1 147.2L361.8 147.5L359.7 148.5L358.1 149.7L356.2 150.3L354.3 150.9L353.2 149.4L352.6 147.6L354.3 146.8L352.8 144.4L352.0 141.9L351.8 141.1L352.6 139.5L353.3 138.0L353.5 136.2L354.3 133.7L354.9 131.7L355.1 129.6L354.1 127.7Z"/>
<path fill="#f2f9f0" d="M352.6 153.1L354.3 150.9L356.2 150.4L357.8 149.1L359.7 148.5L361.8 147.6L364.1 147.2L366.2 144.9L367.9 146.0L368.6 147.7L369.8 149.0L370.7 150.4L371.8 151.9L372.6 153.5L373.9 154.7L371.9 154.9L369.8 155.0L367.7 155.3L365.7 156.2L364.1 155.6L362.5 155.1L360.8 155.0L359.2 157.0L357.9 157.9L356.3 158.6L355.1 159.6L354.3 158.1L353.5 156.7L352.9 154.9Z"/>
<path fill="#9ccf94" d="M333.3 152.7L333.1 150.6L333.3 148.5L334.2 146.3L334.8 144.0L335.6 141.1L337.6 140.8L339.5 141.3L341.5 142.1L343.6 142.2L345.5 141.6L347.4 141.1L349.4 141.1L352.0 141.9L352.8 144.4L352.0 145.8L350.7 146.8L349.5 148.3L349.2 150.2L348.2 151.7L346.7 152.8L344.9 153.4L344.2 154.9L342.8 155.8L340.8 156.4L338.7 156.2L337.6 154.4L336.3 152.9Z"/>
<path fill="#9ccf94" d="M369.8 111.1L371.4 111.6L373.1 112.1L374.7 112.5L376.4 112.6L378.0 112.1L379.7 112.4L381.3 112.1L383.1 111.9L384.9 112.0L386.0 114.9L385.0 117.7L383.7 119.8L384.6 121.4L385.7 122.7L387.0 123.9L387.9 125.8L389.3 127.2L387.5 127.6L385.6 126.9L383.8 126.8L382.0 126.8L380.1 127.2L378.4 127.5L376.7 127.5L375.0 127.5L373.3 127.6L371.5 126.9L369.8 127.2L370.1 125.6L369.9 124.0L370.1 122.4L369.9 120.8L369.6 119.2L369.5 117.6L369.5 116.0L370.1 114.4L369.6 112.7Z"/>
<path fill="#f2f9f0" d="M396.0 166.0L397.6 165.1L399.3 164.5L400.5 163.4L401.5 162.1L402.8 161.2L404.2 160.3L405.1 158.8L406.4 157.8L407.2 156.3L408.3 155.0L408.9 153.5L410.2 152.3L410.6 150.6L411.6 149.3L412.1 147.6L412.4 146.0L412.9 143.9L411.0 144.2L409.1 144.7L407.5 145.4L405.9 145.3L404.2 145.5L402.6 145.8L400.9 146.0L399.3 145.2L400.3 146.7L401.7 147.8L403.7 148.4L405.5 149.5L407.5 150.1L406.2 151.3L405.2 152.7L403.6 153.6L402.6 155.0L400.1 155.8L398.1 156.6L396.0 156.7L396.0 158.6L395.7 160.5L396.3 162.3L396.5 164.1Z"/>
<path fill="#f2f9f0" d="M348.2 190.2L348.6 188.5L349.7 187.0L350.5 185.5L350.3 183.5L351.3 182.0L350.7 180.0L350.2 177.9L349.6 176.3L349.3 174.6L348.5 173.0L350.5 172.9L352.3 172.6L354.1 173.0L355.9 173.0L356.9 174.6L357.5 176.3L359.7 175.8L361.6 174.7L364.6 175.2L365.0 176.9L364.9 178.8L366.3 180.3L368.2 181.2L368.4 182.8L368.2 184.5L366.6 184.7L364.9 184.5L364.7 186.3L364.9 188.1L364.9 189.9L366.4 190.9L367.4 192.3L365.7 192.3L364.1 192.9L362.5 192.7L360.9 192.1L359.2 191.8L357.5 191.7L355.6 191.4L353.7 191.6L351.8 191.7L350.0 191.1Z"/>
<path fill="#e2f1de" d="M348.2 190.2L350.1 190.9L351.8 191.7L353.7 191.6L355.6 192.0L357.5 191.7L359.3 191.6L360.8 192.7L362.5 192.7L364.1 192.1L365.7 192.2L367.4 192.3L369.8 192.2L368.2 192.6L366.5 192.3L364.9 192.9L363.3 193.2L363.4 195.2L362.9 197.2L363.3 199.2L361.6 199.2L361.9 201.5L361.6 203.8L361.6 205.8L361.5 207.8L361.5 209.9L359.5 209.9L357.5 210.3L355.9 210.0L355.0 208.6L353.8 207.4L353.6 205.7L353.1 204.1L352.8 202.5L352.6 200.9L351.5 199.4L351.3 197.4L350.3 195.9L349.6 194.2L348.5 192.7Z"/>
<path fill="#5aaa5a" d="M355.9 210.0L357.5 210.3L359.5 209.8L361.5 209.9L361.5 207.8L361.8 205.8L361.6 203.8L362.9 206.6L364.8 205.7L366.6 204.6L368.8 203.9L371.1 203.8L372.5 202.6L373.9 201.5L375.7 200.7L377.0 199.4L380.1 199.9L380.9 201.5L381.3 203.3L382.2 205.3L382.6 207.4L381.9 210.3L379.6 212.3L378.5 213.7L377.1 214.6L375.7 215.8L374.7 217.2L372.9 218.3L370.8 218.9L369.1 219.2L367.4 219.1L365.7 218.9L363.7 219.7L361.6 220.2L359.0 219.2L358.7 217.4L358.4 215.6L357.3 213.9L356.6 211.9Z"/>
<path fill="#e2f1de" d="M373.1 211.7L375.6 210.0L377.0 211.5L375.1 213.3Z"/>
<path fill="#e2f1de" d="M395.2 181.2L395.5 182.8L394.9 184.5L395.1 186.1L395.4 187.8L394.1 189.1L392.2 189.5L391.1 191.1L389.5 191.8L388.5 193.3L386.9 194.3L386.2 195.9L386.2 197.9L386.5 199.8L387.0 201.7L385.7 202.8L384.5 204.1L382.9 204.9L382.6 207.4L382.1 205.3L381.3 203.3L380.4 201.7L380.1 199.9L380.9 198.2L382.1 196.8L382.3 194.8L382.2 192.9L382.9 191.0L380.8 190.3L378.8 189.4L380.8 189.0L382.6 188.3L384.4 187.6L386.2 186.9L386.5 185.2L386.5 183.4L386.7 181.7L388.5 181.6L390.3 182.2L391.9 182.0L393.5 181.5Z"/>
<path fill="#e2f1de" d="M409.6 182.8L410.1 184.8L410.6 186.8L411.6 188.6L410.8 190.6L409.9 192.7L409.4 194.3L408.7 195.9L408.5 197.6L408.2 199.3L407.5 200.9L406.5 202.4L405.8 204.1L404.1 204.2L402.6 204.9L401.7 202.8L400.4 200.9L400.7 199.2L401.0 197.6L401.0 196.0L400.9 194.3L401.5 192.1L401.7 189.9L403.4 189.2L405.0 188.6L406.1 186.8L407.5 185.3L408.6 184.1Z"/>
<path fill="#f2f9f0" d="M301.4 142.7L303.1 143.7L304.3 145.2L305.6 146.4L306.8 147.6L307.6 150.1L309.5 151.5L311.7 152.6L311.1 150.8L310.1 149.3L310.9 146.8L310.2 144.7L309.3 142.7L307.3 143.0L305.3 142.8L303.4 142.8Z"/>
<path fill="#f2f9f0" d="M333.3 152.7L331.5 153.1L331.3 151.1L330.7 149.2L330.6 147.3L330.0 145.4L331.6 144.6L332.7 143.2L334.8 144.0L334.3 146.3L333.3 148.5L333.2 150.6Z"/>
<path fill="#5aaa5a" d="M374.7 65.8L376.4 65.5L378.0 64.8L376.2 64.6L374.4 64.2L375.9 63.3L377.7 62.7L378.7 61.1L380.5 60.6L378.8 58.4L378.0 56.8L377.2 55.2L378.0 52.7L376.4 51.9L375.6 49.4L377.4 48.9L379.3 48.9L381.1 49.5L382.9 49.6L384.8 50.2L386.7 50.0L388.7 50.2L390.6 50.4L392.3 51.4L394.2 51.9L396.0 52.4L395.2 54.7L393.4 54.4L391.5 54.5L389.7 54.3L387.8 54.3L385.9 56.0L387.1 57.1L388.7 57.6L391.1 57.3L393.2 57.5L395.2 57.6L397.1 56.7L399.2 56.3L400.9 55.2L400.7 53.1L400.9 51.1L402.5 51.6L404.2 51.7L405.8 52.2L407.5 52.3L409.1 51.6L410.8 52.2L412.4 51.5L414.0 51.1L415.7 51.4L417.3 51.0L418.9 51.0L420.5 50.5L422.2 50.7L423.8 50.6L425.9 49.7L427.9 48.9L429.7 49.3L431.6 49.2L433.4 49.3L435.2 49.5L436.9 49.9L438.6 47.8L439.6 46.3L440.2 44.5L442.0 44.3L443.5 43.4L445.1 43.6L446.8 43.6L448.4 44.0L447.7 46.3L447.6 48.6L448.5 50.0L449.4 51.4L450.0 53.0L451.7 51.1L452.5 49.2L454.1 47.9L454.9 46.2L456.6 44.8L456.7 46.8L457.4 48.6L458.1 50.5L459.0 52.2L459.8 50.7L460.7 49.3L461.5 47.8L463.1 46.2L461.7 44.7L460.7 42.9L462.5 43.1L464.3 42.4L466.1 42.5L467.9 42.5L469.7 42.1L471.3 40.3L473.0 40.4L474.6 39.9L476.2 39.5L477.9 39.6L479.5 39.0L481.2 39.5L482.8 38.8L484.4 38.8L486.1 38.9L487.7 38.3L489.3 38.2L490.9 37.9L492.6 38.0L494.2 37.4L495.8 36.7L497.4 36.1L499.1 36.0L500.7 36.7L502.5 36.8L504.1 37.5L505.7 37.4L507.4 37.7L509.0 38.0L510.6 38.2L512.2 38.5L513.0 40.0L513.8 41.5L514.7 42.9L516.5 42.9L518.3 43.6L520.1 43.7L521.9 43.1L523.7 43.7L525.4 43.9L527.0 43.9L528.6 43.6L530.2 43.0L531.9 43.5L533.5 43.2L535.1 42.5L536.8 42.9L538.7 43.8L540.1 45.3L541.6 46.4L543.3 46.6L545.0 46.5L546.6 46.0L548.2 45.6L549.8 45.4L551.5 45.2L553.2 45.5L554.8 44.9L556.4 44.4L558.1 44.5L559.7 45.0L561.3 45.1L563.0 44.7L564.6 45.5L566.3 45.4L567.9 45.8L569.5 45.8L571.1 46.2L572.8 46.2L574.5 46.2L576.0 46.7L577.8 46.3L579.3 46.9L581.0 47.0L582.6 47.3L584.2 47.7L585.9 47.7L587.5 48.4L589.2 48.4L590.8 48.6L592.5 48.4L594.1 48.4L595.7 48.4L597.4 48.7L599.0 48.4L600.6 48.8L602.3 48.5L603.9 48.9L605.6 48.9L607.2 48.9L608.8 49.0L610.5 49.3L612.1 48.6L613.7 49.4L615.4 49.0L617.0 49.1L618.6 49.4L620.3 49.8L621.9 50.3L623.6 50.2L623.7 52.2L623.6 54.1L623.6 56.0L621.1 57.6L621.1 60.1L619.1 60.2L617.5 61.5L615.5 61.5L613.7 62.2L611.8 63.0L610.1 64.4L608.0 65.0L606.2 64.8L604.3 64.7L602.5 64.3L600.6 64.7L598.6 65.1L596.5 65.3L595.7 66.8L595.7 68.6L594.9 70.1L594.1 71.5L593.0 73.2L591.6 74.6L590.8 76.4L589.2 77.9L587.1 78.5L585.4 79.7L585.3 77.9L584.9 76.2L585.2 74.4L584.5 72.6L584.4 70.8L584.3 69.1L585.6 67.8L587.1 66.6L588.0 65.0L589.5 63.8L590.8 62.5L589.2 62.6L587.5 62.5L585.9 62.2L584.3 62.5L582.8 64.3L581.0 65.8L579.3 65.7L577.7 66.2L576.1 66.3L574.5 66.3L572.8 66.5L571.2 66.2L569.5 65.8L567.9 66.0L566.3 65.9L564.6 66.3L563.0 66.1L560.5 67.4L559.2 68.6L557.8 69.6L556.2 70.4L554.8 71.5L553.5 72.7L552.4 74.0L553.9 74.6L555.7 74.4L557.2 75.4L558.9 75.6L560.5 78.1L559.7 79.6L559.4 81.3L558.9 83.0L558.1 84.6L556.9 85.8L555.6 87.1L554.5 88.6L552.9 89.7L551.1 90.5L549.9 92.0L548.2 92.5L546.6 93.1L545.0 93.2L543.3 93.5L542.7 93.3L543.7 91.2L543.3 89.5L545.0 89.8L546.6 89.5L548.2 87.7L549.1 85.4L549.6 84.0L547.5 84.3L545.4 84.6L543.3 85.1L542.0 84.2L540.6 83.2L539.1 82.5L537.6 81.7L536.9 80.2L535.8 79.0L535.3 77.4L534.3 76.1L532.5 76.1L530.7 75.8L528.8 76.3L527.0 75.9L526.4 77.9L525.7 79.7L524.5 81.3L522.2 81.3L519.9 81.7L517.8 80.9L515.5 80.9L513.9 80.9L512.3 81.4L510.6 81.2L508.9 81.5L507.3 81.9L505.7 82.2L504.0 81.7L502.4 80.9L500.4 80.9L498.4 80.7L496.4 80.5L494.6 80.1L492.8 79.4L491.1 78.6L489.3 78.1L487.6 78.3L486.2 79.7L484.4 79.9L482.8 80.5L481.1 80.9L479.5 80.9L477.9 80.3L476.2 80.5L474.4 81.5L472.6 82.7L471.8 82.8L470.2 81.5L468.2 80.9L466.4 79.9L464.8 79.7L463.2 80.3L461.5 80.0L459.9 80.0L458.6 78.5L457.4 76.8L455.8 75.6L453.3 74.0L451.6 73.6L450.0 74.2L448.4 74.4L446.8 74.7L445.1 74.5L443.6 73.4L441.9 72.5L440.3 73.1L438.6 73.5L437.0 73.9L435.3 73.8L433.7 74.5L432.0 74.2L430.5 75.0L428.8 75.0L429.6 76.4L428.8 77.6L426.9 78.3L425.5 79.7L423.9 80.2L422.2 79.7L420.6 80.2L418.1 79.7L416.4 79.8L414.8 79.7L413.2 78.9L411.6 78.9L410.2 79.8L408.6 80.4L406.7 80.7L405.8 83.0L405.0 83.8L407.5 85.0L409.1 87.2L406.7 88.6L406.3 91.3L407.5 93.6L408.5 94.8L406.7 94.6L405.0 94.8L403.3 94.6L401.6 94.3L400.1 93.5L398.3 92.8L396.3 92.4L394.4 92.2L392.9 91.0L391.1 90.4L390.3 89.0L391.4 86.1L393.0 85.5L394.4 84.6L393.9 82.0L391.1 81.3L389.0 81.3L387.0 80.5L386.2 78.4L384.6 77.6L382.1 78.1L381.0 76.4L380.2 74.3L379.3 72.2L377.1 71.6L374.7 71.4L374.3 69.8L373.9 68.3Z"/>
<path fill="#5aaa5a" d="M34.2 51.1L35.8 51.7L37.5 51.4L39.1 52.3L40.8 52.3L42.4 52.4L44.2 52.4L45.8 52.9L47.3 54.0L48.9 54.6L50.6 54.8L49.2 56.5L47.3 57.6L45.7 57.6L44.1 57.0L42.4 57.3L40.8 56.5L39.1 56.7L37.5 56.5L35.9 57.0L34.2 56.8L34.1 54.9L34.3 53.0Z"/>
<path fill="#5aaa5a" d="M413.2 46.2L415.0 46.4L416.8 46.9L418.7 46.7L420.4 47.6L422.2 47.6L420.5 46.2L418.9 44.5L420.7 43.0L422.2 41.2L423.9 40.9L425.5 40.2L427.1 39.7L428.8 39.5L430.4 38.8L432.1 39.0L433.7 38.6L435.3 38.2L436.9 37.7L438.5 37.3L440.2 37.5L438.6 37.1L436.9 37.5L435.3 37.4L433.7 38.0L432.0 37.8L430.4 38.0L428.7 37.8L427.1 38.1L425.5 38.6L423.9 39.1L422.2 39.2L420.5 39.0L418.9 39.6L417.4 41.3L415.7 42.9L414.3 44.4Z"/>
<path fill="#5aaa5a" d="M479.5 33.1L481.1 33.3L482.8 33.6L484.4 33.6L486.1 33.3L487.7 33.1L489.3 33.5L491.0 33.7L492.6 33.9L494.2 34.1L495.8 34.5L497.5 34.7L499.2 34.1L500.8 34.7L499.3 33.6L497.6 32.8L496.0 31.9L494.3 31.4L492.6 30.6L491.0 30.8L489.3 30.3L487.7 30.3L486.1 30.4L484.4 30.2L482.8 30.6L481.2 31.9Z"/>
<path fill="#5aaa5a" d="M553.2 40.4L554.9 40.5L556.4 41.3L558.0 41.9L559.8 41.8L561.3 42.7L563.0 42.9L564.7 42.9L566.2 41.9L567.9 41.9L569.6 41.6L571.2 41.1L572.8 40.5L574.5 40.4L572.8 40.2L571.2 39.4L569.6 38.9L567.9 38.8L566.3 38.8L564.6 39.2L563.0 38.5L561.4 38.5L559.7 39.0L558.1 38.8L556.4 39.3L554.7 39.5Z"/>
<path fill="#5aaa5a" d="M561.4 75.6L563.0 75.6L563.1 77.7L563.8 79.7L564.2 81.4L564.6 83.0L563.0 82.2L563.4 84.5L563.8 86.8L561.4 87.9L561.3 86.3L561.0 84.6L560.9 83.0L561.4 81.3L561.1 79.7L561.4 78.1Z"/>
<path fill="#c6e4c1" d="M406.7 80.7L408.6 80.4L410.0 79.4L411.6 78.9L413.2 79.3L414.9 79.2L416.5 79.6L418.1 79.7L420.6 80.2L422.2 80.0L423.8 79.9L425.5 79.7L426.9 78.4L428.8 77.6L429.6 76.4L428.8 75.0L430.3 74.3L432.1 74.8L433.6 74.0L435.3 73.8L436.9 73.1L438.6 73.3L440.3 73.1L441.9 72.5L443.6 73.2L445.1 74.5L446.8 74.5L448.4 74.1L450.0 74.2L451.6 73.7L453.3 74.0L455.8 75.6L457.4 76.8L458.2 78.9L459.9 80.0L461.5 80.3L463.1 79.8L464.8 79.7L466.4 79.9L468.2 80.9L470.1 81.7L471.8 82.8L470.2 83.3L468.9 84.3L468.4 86.3L466.6 86.2L464.8 85.9L463.6 88.7L461.8 88.7L460.2 89.5L460.2 91.3L460.7 93.0L458.7 93.1L457.0 92.8L455.2 92.7L453.4 93.4L451.7 93.1L450.0 92.3L448.5 93.3L446.8 93.7L445.1 94.0L444.0 95.3L442.6 96.2L441.0 96.6L439.4 95.6L438.0 94.4L436.9 92.8L435.3 92.3L433.7 91.8L432.1 91.0L430.4 90.9L428.8 90.4L426.9 89.2L424.7 88.7L422.5 88.8L420.6 89.5L421.0 91.6L420.5 93.6L420.6 95.6L418.9 95.3L417.1 95.2L415.3 94.9L415.7 93.6L412.9 92.5L411.6 90.4L413.2 88.7L415.7 86.8L414.0 86.8L412.4 86.3L410.6 86.4L409.1 87.2L407.5 85.0L405.8 83.0Z"/>
<path fill="#c6e4c1" d="M415.3 94.9L417.2 94.9L418.9 95.3L420.6 95.6L420.6 93.6L420.7 91.6L420.6 89.5L422.7 89.5L424.7 88.7L426.7 89.7L428.8 90.4L430.4 90.8L432.0 91.3L433.7 91.8L435.4 92.0L436.9 92.8L438.0 94.4L439.4 95.6L441.0 96.6L442.4 95.7L444.0 95.3L445.1 94.0L446.6 93.0L448.3 92.7L450.0 92.3L451.7 93.1L453.4 93.0L455.2 93.5L457.0 93.5L458.7 93.1L460.2 94.4L458.4 94.8L456.9 96.1L454.9 96.0L453.3 96.9L451.2 97.5L449.2 98.5L450.3 100.3L451.7 102.0L449.7 101.9L447.9 103.1L445.9 103.1L443.5 101.8L441.5 102.4L439.4 102.3L437.8 102.0L436.0 102.8L434.5 103.9L432.6 103.8L430.9 104.3L429.1 104.8L427.9 103.4L426.2 102.8L424.7 101.7L423.0 101.0L421.1 101.1L419.3 102.1L417.3 102.1L417.0 99.4L415.7 97.7Z"/>
<path fill="#f2f9f0" d="M415.3 94.9L417.1 94.9L418.9 95.3L420.6 95.6L423.0 94.1L424.7 93.6L427.1 94.4L429.6 95.6L431.1 96.4L432.5 97.3L433.7 98.5L435.7 99.8L437.8 101.0L437.8 102.0L436.3 103.2L434.5 103.9L432.7 104.4L430.9 104.8L429.1 104.8L427.9 103.4L426.4 102.5L424.5 102.2L423.0 101.0L421.1 101.2L419.3 102.0L417.3 102.1L417.0 99.4L415.7 97.7Z"/>
<path fill="#c6e4c1" d="M394.4 92.2L396.4 92.2L398.1 93.4L400.1 93.5L401.8 93.7L403.3 94.7L405.0 94.8L406.7 95.1L408.5 94.8L409.9 97.4L408.9 100.3L407.5 100.2L405.9 99.2L403.9 99.2L402.2 98.2L400.1 95.9L398.5 95.6L396.8 95.3L395.3 93.9Z"/>
<path fill="#5aaa5a" d="M371.5 96.7L371.8 94.9L374.7 94.6L376.3 95.4L377.9 95.7L379.6 95.8L381.3 95.5L382.9 95.1L384.5 94.6L386.2 94.4L387.7 95.3L389.5 95.5L391.1 96.1L393.0 95.9L394.9 95.2L396.8 95.3L398.5 95.3L400.1 95.9L402.2 98.2L402.2 100.3L401.4 102.3L398.5 102.3L396.8 102.4L395.2 102.8L393.6 103.1L391.3 103.4L389.0 103.0L387.7 104.3L388.0 103.4L385.4 103.0L383.6 103.2L382.1 104.1L380.4 104.1L378.8 103.8L376.4 103.1L373.9 102.6L372.3 100.2L372.8 98.5Z"/>
<path fill="#c6e4c1" d="M387.7 104.3L389.0 103.0L391.3 103.0L393.6 103.1L395.1 102.5L396.8 102.4L398.5 102.3L397.5 103.7L397.3 105.3L396.5 106.7L394.6 107.9L392.4 108.5L390.5 109.4L388.7 110.2L387.3 109.2L387.8 106.7Z"/>
<path fill="#c6e4c1" d="M398.5 102.3L401.4 102.3L403.4 104.6L404.0 106.4L404.2 108.4L405.4 110.2L407.1 111.6L407.5 114.1L405.0 115.6L402.1 115.4L400.4 114.7L399.4 113.1L397.7 112.5L395.9 112.2L394.5 110.8L392.7 110.5L392.4 108.5L394.5 107.8L396.5 106.7L396.9 105.1L397.8 103.8Z"/>
<path fill="#9ccf94" d="M386.0 114.9L385.0 112.0L386.2 109.0L387.3 109.2L388.7 110.2L390.5 109.2L392.4 108.5L392.7 110.5L391.2 111.3L389.5 111.6L391.1 114.1L388.7 114.9L386.2 115.2Z"/>
<path fill="#5aaa5a" d="M401.4 102.3L401.6 100.2L402.2 98.2L404.0 98.8L405.6 99.9L407.5 100.2L408.9 100.3L409.3 101.6L410.7 102.7L412.4 103.0L414.1 103.1L415.6 102.1L417.3 102.1L419.2 101.6L421.2 101.7L423.0 101.0L424.8 101.5L426.2 102.8L427.9 103.4L429.1 104.8L428.8 107.5L428.7 109.6L428.3 111.6L429.9 112.1L430.2 113.8L431.2 115.1L432.0 116.7L431.6 118.6L432.3 120.2L432.5 121.9L429.7 121.9L428.0 122.1L426.3 122.0L424.7 121.0L423.0 121.1L421.4 118.8L419.7 119.2L418.1 119.7L416.4 119.3L414.8 118.4L413.2 117.7L412.5 115.7L411.1 114.1L408.3 114.1L407.5 114.1L407.1 111.6L405.5 110.2L404.2 108.4L403.9 106.5L403.4 104.6Z"/>
<path fill="#5aaa5a" d="M386.2 117.4L387.7 118.8L388.7 120.6L390.0 121.8L390.6 123.5L391.9 124.7L392.3 126.4L393.1 128.0L394.2 129.2L395.1 130.5L395.7 132.1L397.0 133.2L397.7 134.9L398.8 136.2L399.6 134.7L400.9 134.7L402.6 134.9L404.2 135.0L405.8 135.4L407.4 134.4L409.2 134.0L410.8 133.3L412.4 132.4L414.0 132.1L415.7 131.1L417.0 129.7L418.3 128.2L419.9 127.2L418.9 126.0L417.2 125.7L415.7 124.5L414.0 124.1L413.2 123.4L412.1 122.8L411.1 120.3L409.9 119.0L408.1 116.5L406.7 115.7L405.0 115.6L402.1 115.4L400.6 114.5L399.2 113.3L397.7 112.5L395.9 112.2L394.5 110.9L392.7 110.5L391.2 111.2L389.5 111.6L391.1 114.1L388.7 114.9L386.0 114.9Z"/>
<path fill="#c6e4c1" d="M398.8 136.2L398.8 138.2L399.1 140.1L399.8 141.9L402.6 142.2L404.5 141.6L406.2 140.5L408.3 140.3L410.0 140.0L411.3 139.0L413.0 138.6L414.4 137.7L416.0 136.4L417.8 135.2L419.8 134.4L421.3 133.6L422.5 132.3L423.5 130.9L424.7 129.6L425.5 127.8L426.8 126.4L424.8 124.6L423.0 124.1L421.1 122.4L421.1 120.1L419.9 122.3L418.1 123.6L416.1 123.9L414.0 124.1L415.6 124.8L417.5 125.0L418.9 126.0L419.9 127.2L418.4 128.4L417.0 129.7L415.5 130.9L414.0 132.1L412.4 132.4L410.9 133.5L409.0 133.7L407.4 134.4L405.8 135.4L404.2 134.8L402.5 135.1L400.9 134.7L399.6 134.7Z"/>
<path fill="#f2f9f0" d="M429.1 104.8L430.9 104.7L432.7 104.1L434.5 103.9L436.2 103.2L437.8 102.0L439.4 102.3L441.4 101.7L443.5 101.8L445.9 103.1L447.6 103.3L449.3 103.2L450.9 102.6L449.2 103.2L447.6 103.7L445.9 104.3L445.5 105.9L445.1 107.5L442.7 108.4L442.6 110.0L442.7 111.6L441.2 112.9L439.2 113.0L437.8 114.3L436.2 114.7L434.5 114.9L432.9 115.2L431.2 115.1L428.6 114.4L429.9 112.1L428.3 111.6L428.3 109.6L428.8 107.5Z"/>
<path fill="#5aaa5a" d="M431.2 115.1L432.9 115.2L434.4 114.2L436.1 114.1L437.8 114.3L439.5 113.5L440.9 112.3L442.7 111.6L442.2 110.0L442.7 108.4L445.1 107.5L445.6 105.9L445.9 104.3L447.6 103.8L449.2 103.2L450.9 102.6L452.4 103.6L454.3 103.9L455.8 105.1L453.6 106.0L451.7 107.5L450.9 110.0L451.7 110.3L450.9 112.5L449.2 114.9L447.1 116.0L445.1 117.4L443.5 119.8L444.7 121.3L445.1 123.1L443.4 123.6L441.5 123.4L439.1 122.6L437.8 121.5L436.2 121.6L434.6 121.7L433.0 121.9L431.4 122.2L429.7 121.9L432.5 121.9L432.1 120.2L431.5 118.6L431.6 116.8Z"/>
<path fill="#5aaa5a" d="M441.5 123.4L443.4 123.6L445.1 123.1L444.0 121.6L443.5 119.8L445.1 117.4L447.2 116.2L449.2 114.9L450.9 112.5L451.7 110.3L450.9 110.0L451.7 107.5L453.8 106.5L455.8 105.1L457.4 107.1L458.5 108.4L459.0 110.0L457.9 112.0L459.6 113.1L461.5 113.8L460.2 116.1L461.6 117.0L463.3 117.0L464.9 117.6L466.4 118.2L468.0 118.9L469.7 119.0L471.3 119.3L473.0 119.8L473.3 117.5L474.4 118.8L475.9 119.5L477.7 119.5L479.5 119.0L481.4 118.2L483.2 117.5L485.2 117.0L487.7 118.2L486.2 119.9L484.4 121.5L483.6 123.9L482.7 125.6L481.6 127.2L480.3 126.4L480.0 124.7L480.0 122.1L478.1 120.7L475.9 120.1L473.4 120.1L474.6 121.1L474.2 123.2L473.9 125.2L474.1 127.3L471.3 128.8L469.5 129.8L468.0 131.3L466.5 132.4L465.6 134.3L464.0 135.4L462.1 136.6L460.4 137.8L459.7 139.8L459.9 141.9L459.4 143.9L459.7 146.0L458.5 147.5L456.9 148.6L455.8 150.1L454.1 147.6L453.2 145.8L452.5 143.9L451.8 141.6L450.9 139.5L449.9 137.9L449.2 136.2L448.4 134.6L447.9 132.5L448.1 130.5L447.6 128.0L446.0 128.6L444.3 129.2L443.1 127.9L441.9 126.7L441.3 125.1Z"/>
<path fill="#c6e4c1" d="M460.2 116.1L461.5 113.8L464.0 114.3L466.4 115.4L468.2 116.1L469.7 117.4L471.5 117.9L473.3 117.5L473.0 119.8L471.4 119.2L469.8 118.6L468.1 118.5L466.4 118.2L464.9 117.4L463.4 116.8L461.9 116.3Z"/>
<path fill="#c6e4c1" d="M474.1 127.3L473.8 125.2L474.6 123.2L474.6 121.1L473.4 120.1L475.9 120.1L478.0 120.9L480.0 122.1L480.0 124.7L480.1 126.6L480.5 128.5L479.2 126.4L477.0 127.2Z"/>
<path fill="#9ccf94" d="M459.9 147.2L461.5 148.9L462.8 150.9L461.8 153.1L459.9 153.4L459.7 151.7L459.4 150.1Z"/>
<path fill="#1b5319" d="M449.2 98.5L451.4 98.1L453.3 96.9L455.1 96.4L456.7 95.5L458.5 95.1L460.2 94.4L460.7 93.0L460.4 91.3L460.2 89.5L462.0 89.5L463.6 88.7L464.8 85.9L466.6 85.9L468.4 86.3L468.9 84.3L470.3 83.4L471.8 82.8L472.6 82.7L473.0 83.8L475.0 84.7L477.0 85.4L477.9 87.9L479.7 88.4L481.1 89.5L482.4 90.5L483.6 91.8L485.2 92.4L486.5 93.3L488.6 93.1L490.6 93.4L492.6 93.5L494.2 93.8L495.9 93.8L497.6 94.1L499.2 94.4L500.8 95.1L502.8 94.3L504.9 93.8L506.5 93.6L508.1 93.4L509.8 93.5L512.2 91.7L514.2 90.6L516.3 89.9L517.8 88.6L519.6 87.9L521.2 86.9L523.2 87.1L525.0 86.6L523.6 85.6L522.1 84.8L520.9 85.1L518.0 84.8L519.0 83.3L519.9 81.7L522.2 81.6L524.5 81.3L525.1 79.4L526.3 77.8L527.0 75.9L528.8 76.0L530.7 76.1L532.5 76.2L534.3 76.1L535.2 77.5L536.1 78.8L537.0 80.2L537.6 81.7L539.2 82.3L540.5 83.4L542.0 84.2L543.3 85.1L545.4 84.8L547.4 83.9L549.6 84.0L549.1 85.4L548.0 87.6L546.6 89.5L545.0 89.2L543.3 89.5L543.7 91.2L542.7 93.3L540.9 93.8L538.4 94.6L536.9 95.6L535.2 96.1L533.7 96.9L532.4 97.9L530.5 98.2L528.6 98.5L527.8 99.4L529.1 96.9L527.0 96.2L525.7 97.4L524.0 97.9L522.9 99.2L521.7 100.2L523.7 102.3L526.5 101.3L529.4 102.3L527.9 103.4L526.2 104.1L524.0 105.9L524.9 107.3L526.2 108.4L527.5 109.8L528.3 111.6L528.6 114.1L527.8 116.5L526.7 118.6L525.0 120.1L523.3 121.4L522.1 123.1L520.5 124.5L518.8 125.9L517.3 126.7L515.5 126.7L513.5 127.4L511.4 128.0L509.5 129.5L508.6 127.8L505.7 127.8L503.6 125.7L501.3 125.1L498.3 126.0L496.0 126.5L495.2 128.5L492.6 127.8L491.0 126.7L490.5 123.6L488.5 122.6L488.5 120.9L488.7 119.2L488.5 117.5L487.7 117.0L486.0 116.9L484.4 116.4L482.8 115.7L480.9 116.4L479.5 117.7L477.9 117.4L476.2 117.8L474.6 117.4L473.3 117.5L471.5 117.6L469.7 117.4L468.0 116.5L466.4 115.4L464.0 114.3L461.5 113.8L459.8 112.7L457.9 112.0L459.0 110.0L458.3 108.5L457.4 107.1L456.3 105.1L454.9 103.9L453.4 103.0L451.7 102.3L450.9 100.2Z"/>
<path fill="#1b5319" d="M506.7 131.8L509.0 130.3L510.6 131.1L509.8 132.9L508.2 133.4Z"/>
<path fill="#9ccf94" d="M525.5 125.5L527.0 127.3L527.5 125.7L528.3 124.0L528.6 122.3L527.8 121.8L526.2 123.1Z"/>
<path fill="#e2f1de" d="M472.6 82.7L474.5 81.8L476.2 80.5L477.9 80.8L479.5 80.5L481.1 80.8L482.8 80.5L484.5 80.1L486.2 79.7L487.6 78.4L489.3 78.1L491.0 79.0L493.0 78.9L494.5 80.1L496.4 80.5L498.4 80.7L500.4 80.7L502.4 80.9L503.9 81.9L505.7 82.2L507.3 82.0L509.0 81.7L510.6 81.8L512.3 81.6L513.9 81.2L515.5 80.9L517.7 81.2L519.9 81.7L519.0 83.3L518.0 84.8L520.9 85.1L522.1 84.8L523.6 85.7L525.0 86.6L523.1 86.6L521.2 86.9L519.7 88.1L518.0 89.0L516.3 89.9L514.3 90.7L512.2 91.7L509.8 93.5L508.2 93.7L506.5 93.8L504.9 93.8L502.8 94.2L500.8 95.1L499.2 94.5L497.5 94.4L495.9 94.2L494.2 94.1L492.6 93.5L490.6 93.6L488.6 93.7L486.5 93.3L485.2 92.3L483.9 91.4L482.3 90.8L481.1 89.5L479.7 88.4L477.9 87.9L477.0 85.4L474.9 84.8L473.0 83.8Z"/>
<path fill="#5aaa5a" d="M535.3 101.5L537.2 101.0L538.9 100.0L539.6 101.9L540.7 103.4L540.4 105.6L537.6 106.6L535.8 106.7L536.0 104.3L536.3 102.6Z"/>
<path fill="#5aaa5a" d="M543.2 107.5L545.0 107.1L547.1 107.2L549.1 106.6L550.7 107.5L552.8 107.1L554.4 106.5L556.1 106.4L558.1 105.1L559.4 104.3L559.5 102.4L559.7 100.5L561.0 98.5L560.5 95.8L558.6 95.8L558.1 97.7L557.8 99.4L555.6 101.5L553.5 103.0L551.5 104.3L549.8 104.2L548.3 105.2L546.6 105.1L544.2 106.6Z"/>
<path fill="#5aaa5a" d="M558.1 95.3L560.5 93.6L563.5 94.4L565.1 93.0L567.1 92.3L565.4 91.2L563.4 89.9L561.4 88.7L560.5 90.4L558.9 92.5Z"/>
<path fill="#5aaa5a" d="M541.1 108.7L543.3 107.7L545.0 109.2L543.7 112.0L542.0 112.1L541.5 110.4Z"/>
<path fill="#5aaa5a" d="M545.8 107.7L547.7 107.8L549.4 107.2L548.6 108.9L546.3 109.5Z"/>
<path fill="#c6e4c1" d="M480.5 128.5L480.8 130.0L481.9 131.4L483.3 132.4L483.4 134.7L483.6 137.0L485.2 137.3L487.1 136.9L488.5 135.7L489.0 138.6L489.6 140.3L490.1 141.9L490.2 143.6L490.1 145.2L490.3 146.8L490.2 148.5L489.8 150.1L491.3 151.2L492.6 152.6L493.1 154.2L493.6 156.3L494.2 158.3L495.7 159.1L496.7 160.5L498.3 161.1L499.5 160.7L499.1 158.7L498.3 156.7L498.2 155.3L496.2 153.1L494.2 151.9L493.1 149.3L491.3 148.0L491.8 145.2L492.6 142.4L493.4 141.1L494.2 142.4L496.7 143.6L497.5 145.2L500.0 146.2L500.8 149.1L503.2 147.6L504.1 146.0L505.7 145.2L507.3 144.4L507.8 141.9L507.1 140.1L507.0 138.2L505.5 136.8L504.1 135.4L502.4 132.9L501.9 132.1L503.2 129.6L505.4 128.0L505.7 127.8L503.6 125.7L501.3 125.1L498.3 126.0L496.0 126.5L495.2 128.5L492.6 127.8L491.0 126.7L490.5 123.6L488.5 122.6L488.4 120.9L488.6 119.2L488.5 117.5L487.7 117.0L485.2 117.0L487.7 118.2L486.0 119.8L484.4 121.5L483.6 123.9L482.3 125.4L481.6 127.2Z"/>
<path fill="#f2f9f0" d="M480.5 128.5L480.8 130.0L481.7 131.5L483.3 132.4L483.4 134.7L483.6 137.0L485.2 137.3L486.8 136.5L488.5 135.7L489.0 138.6L489.5 140.3L490.1 141.9L489.8 143.6L490.4 145.2L490.3 146.8L491.8 145.2L491.0 143.5L490.1 141.9L490.3 140.3L489.5 138.7L489.5 137.0L489.9 135.3L489.3 133.7L490.4 132.2L491.0 130.5L493.4 130.8L494.2 128.0L492.6 127.8L491.0 126.7L490.5 123.6L488.5 122.6L488.5 120.9L488.2 119.2L488.5 117.5L487.7 117.0L485.2 117.0L487.7 118.2L485.8 119.6L484.4 121.5L483.6 123.9L482.5 125.5L481.6 127.2Z"/>
<path fill="#9ccf94" d="M490.1 141.9L489.9 143.6L489.8 145.2L490.3 146.8L489.7 148.4L489.8 150.1L491.3 151.3L492.6 152.6L494.2 151.9L496.2 153.1L494.2 151.9L493.1 149.3L491.3 148.0L491.8 145.2L492.6 142.4L493.4 141.1L494.2 142.4L496.7 143.6L496.6 141.9L497.2 140.3L499.4 139.8L501.6 139.8L500.8 137.0L500.0 134.6L497.5 133.7L495.9 134.1L494.2 134.6L493.8 132.7L493.4 130.8L491.0 130.5L490.4 132.2L489.3 133.7L489.5 135.4L489.0 137.0L489.0 138.6L489.5 140.3Z"/>
<path fill="#9ccf94" d="M505.7 127.8L505.4 128.0L503.2 129.6L501.9 132.1L502.4 132.9L504.1 135.4L505.6 136.7L507.0 138.2L507.0 140.1L507.8 141.9L507.3 144.4L505.6 145.1L504.1 146.0L503.2 147.6L500.8 149.1L500.0 146.2L502.3 145.2L503.3 143.7L504.9 142.7L504.8 141.1L504.9 139.5L504.3 137.7L503.2 136.2L501.9 134.9L500.8 133.4L499.1 131.3L498.0 128.8L496.0 126.5L498.3 126.0L501.3 125.1L503.6 125.7Z"/>
<path fill="#9ccf94" d="M493.1 154.2L493.5 156.3L494.2 158.3L495.9 158.8L497.1 160.0L498.3 161.1L499.5 160.7L499.2 158.6L498.3 156.7L498.2 155.3L496.2 153.1L494.2 152.9Z"/>
<path fill="#c6e4c1" d="M484.9 154.0L486.7 154.4L488.5 154.7L489.6 156.0L491.1 157.0L492.1 158.4L493.3 159.6L494.6 160.7L496.1 161.6L497.2 163.0L498.7 164.0L500.0 166.1L501.2 167.3L502.4 168.4L501.8 170.5L502.1 172.7L500.0 172.7L498.2 171.2L496.4 169.7L495.3 168.4L494.1 167.2L493.4 165.7L491.9 164.2L491.0 162.4L490.1 160.3L489.3 158.9L487.8 158.0L486.7 156.8L485.7 155.5Z"/>
<path fill="#c6e4c1" d="M501.1 174.3L503.2 173.0L504.9 173.3L506.5 173.5L508.1 174.3L509.8 174.5L511.4 174.6L513.1 174.5L514.6 175.5L516.3 176.0L516.3 177.4L514.4 177.6L512.5 177.3L510.6 176.6L509.0 176.2L507.3 176.3L505.7 176.0L503.1 175.3Z"/>
<path fill="#c6e4c1" d="M507.3 160.7L507.6 162.8L508.2 164.8L508.8 166.4L509.3 168.1L511.1 168.2L512.9 168.7L514.7 169.0L516.3 169.7L518.8 168.9L519.6 167.4L519.6 165.7L520.5 164.1L521.2 162.4L522.9 161.6L521.7 160.3L522.3 158.5L523.0 156.7L523.7 155.0L522.2 153.5L520.8 151.9L518.8 152.6L517.2 155.0L516.2 156.7L514.7 157.8L513.1 158.4L511.9 159.6L510.6 160.6L509.0 160.3Z"/>
<path fill="#c6e4c1" d="M523.7 172.2L526.2 172.2L526.6 170.2L526.2 168.1L527.4 169.3L528.6 170.6L530.6 172.2L529.7 170.2L528.5 168.5L527.8 166.5L529.2 165.3L531.1 164.8L529.0 164.4L527.0 164.8L526.2 162.4L527.8 162.5L529.4 161.8L531.1 162.1L532.7 161.6L533.5 160.7L531.9 160.6L530.3 161.2L528.6 161.1L526.9 161.0L525.3 161.6L524.5 164.0L524.0 166.1L523.4 168.1L523.1 170.2Z"/>
<path fill="#c6e4c1" d="M543.3 165.7L544.9 165.0L546.6 164.8L548.3 164.5L550.1 165.1L552.1 165.0L554.0 165.7L555.9 166.1L557.7 167.2L559.7 167.5L559.7 169.2L559.5 171.0L559.9 172.8L560.0 174.5L559.8 176.3L559.7 178.1L558.0 177.9L556.6 176.8L554.8 176.8L554.5 175.1L554.5 173.4L554.3 171.7L552.0 171.4L549.9 170.4L548.0 170.0L546.1 169.7L545.0 167.8L547.4 167.0L545.4 166.4Z"/>
<path fill="#e2f1de" d="M559.7 167.5L561.2 168.2L562.8 168.7L564.3 169.5L565.5 170.9L567.1 171.4L568.8 172.1L570.4 173.0L570.8 174.6L570.8 176.3L572.2 177.4L573.4 178.7L574.5 180.1L572.7 179.4L571.0 178.7L569.6 177.4L567.9 176.6L565.9 176.8L563.8 176.8L563.0 178.3L561.3 178.5L559.7 178.1L559.9 176.3L559.4 174.5L559.5 172.8L560.0 171.0L559.4 169.2Z"/>
<path fill="#e2f1de" d="M574.5 172.2L576.1 170.9L577.7 169.7L578.2 172.2L575.3 173.3Z"/>
<path fill="#c6e4c1" d="M531.9 177.3L533.7 177.5L535.4 177.3L537.1 177.0L535.5 178.2L533.5 178.9L531.1 180.1Z"/>
<path fill="#c6e4c1" d="M517.2 176.5L518.8 176.4L520.4 176.7L522.1 176.5L523.7 176.6L525.6 177.0L527.5 176.3L529.4 176.5L530.3 177.3L528.6 177.0L527.0 177.5L525.4 177.9L523.7 177.8L521.8 177.8L519.9 178.0L518.0 177.6Z"/>
<path fill="#9ccf94" d="M508.3 160.1L510.6 160.6L512.1 159.8L513.2 158.5L514.7 157.8L516.2 156.6L517.2 155.0L518.8 152.6L520.8 151.9L522.2 153.5L523.7 155.0L521.7 156.3L518.8 156.2L517.2 156.7L516.4 158.7L515.5 160.7L513.9 161.0L512.2 160.7L510.6 161.1L509.0 161.6Z"/>
<path fill="#e2f1de" d="M581.8 172.2L583.2 173.1L584.3 174.3L586.7 175.5L585.1 176.0L582.6 174.3Z"/>
<path fill="#e2f1de" d="M589.2 176.3L590.7 177.4L592.5 177.9L594.1 180.4L592.3 180.1L590.8 179.2L590.0 177.8Z"/>
<path fill="#c6e4c1" d="M536.5 168.3L538.1 168.4L538.8 169.4L536.6 169.4Z"/>
<path fill="#c6e4c1" d="M537.6 160.7L539.3 161.2L538.8 162.9L538.4 164.5L537.3 163.2Z"/>
<path fill="#c6e4c1" d="M525.3 132.9L527.1 132.7L528.9 132.9L528.6 135.4L527.8 137.8L529.0 139.4L530.6 140.5L531.9 141.9L529.4 141.1L527.9 140.2L526.2 139.5L525.0 136.7L525.2 134.8Z"/>
<path fill="#c6e4c1" d="M528.6 151.7L530.2 150.8L531.9 150.1L533.0 148.6L534.3 147.3L535.5 149.0L536.0 150.9L535.4 152.5L534.3 153.7L531.9 152.9L530.4 152.0Z"/>
<path fill="#c6e4c1" d="M529.4 144.4L531.4 143.4L533.5 142.7L534.8 145.2L532.9 146.3L531.1 147.6L529.1 146.8Z"/>
<path fill="#c6e4c1" d="M520.8 149.6L521.8 148.2L523.3 147.3L524.5 146.0L524.8 144.7L523.6 146.7L522.1 148.5Z"/>
<path fill="#2a6a28" d="M514.2 205.9L514.3 204.2L514.3 202.6L514.2 200.9L514.7 199.2L515.8 198.9L517.6 197.8L519.6 196.9L521.4 196.2L523.2 195.7L525.2 195.8L527.0 195.1L527.8 193.0L528.9 191.0L531.1 191.0L532.1 189.6L533.5 188.5L534.3 186.9L536.8 185.8L538.7 187.0L540.9 187.8L541.8 186.2L542.0 184.5L543.4 183.3L544.2 181.7L546.6 182.0L548.6 182.0L550.5 182.4L552.4 182.8L551.5 185.1L550.7 187.8L552.3 188.4L553.3 189.9L554.8 190.7L557.3 191.8L558.5 190.6L559.3 189.0L560.5 187.8L560.5 185.7L560.7 183.7L561.6 182.3L562.2 180.7L562.8 182.3L563.8 183.7L564.8 185.0L565.4 186.6L567.1 188.6L567.2 190.6L568.1 192.4L568.4 194.3L569.8 195.5L571.5 196.3L572.8 197.6L574.5 199.0L575.8 200.9L576.7 202.5L578.0 203.7L579.4 204.9L579.5 206.7L580.4 208.2L580.3 210.0L580.3 212.1L579.4 213.9L578.4 215.8L576.9 217.2L576.4 218.8L575.6 220.2L574.8 221.6L574.5 224.6L572.6 225.5L570.8 226.6L568.7 227.0L567.0 226.5L565.4 225.7L563.5 225.6L561.6 225.9L559.7 225.6L558.7 224.1L557.3 223.0L554.8 221.5L554.7 219.3L554.5 217.2L553.2 218.5L551.2 220.2L550.7 218.6L549.9 217.2L548.2 216.8L546.6 216.0L545.0 215.2L543.3 214.8L541.7 215.3L540.2 216.0L538.4 215.9L536.8 215.8L535.1 216.0L533.5 216.4L532.4 217.7L531.1 218.7L529.1 219.2L527.0 218.5L525.0 218.9L523.5 219.6L522.1 220.5L520.3 220.5L518.7 220.0L517.2 219.3L518.1 217.7L517.5 216.0L517.7 214.1L517.2 212.3L516.3 209.9L515.0 208.0Z"/>
<path fill="#2a6a28" d="M565.8 229.8L567.7 230.3L569.7 230.3L571.7 230.2L571.2 233.3L569.2 234.6L566.8 232.8Z"/>
<path fill="#5aaa5a" d="M611.6 219.5L613.3 220.5L614.6 222.1L615.7 223.6L617.0 224.8L619.1 224.7L621.1 224.9L619.5 227.4L618.3 229.2L616.9 230.1L615.7 231.3L614.7 230.6L615.4 227.9L613.4 227.4L614.9 225.4L614.2 223.3L613.2 221.2Z"/>
<path fill="#5aaa5a" d="M611.6 229.5L614.1 231.1L612.4 233.6L610.9 234.9L609.2 235.9L608.0 238.3L606.5 239.3L604.7 239.5L603.2 238.6L601.5 238.5L602.6 237.1L603.9 235.7L606.1 235.0L608.0 233.6L609.4 232.5L610.5 231.1Z"/>
<path fill="#e2f1de" d="M597.4 196.3L598.9 197.6L600.5 198.8L602.3 199.7L601.5 199.5L599.7 198.3L597.9 197.2Z"/>
<path fill="#e2f1de" d="M619.1 191.8L621.1 191.8L621.1 193.0L619.5 193.0Z"/>
<path fill="#2a6a28" stroke-width="1.6" d="M170.0 30.9L180.7 28.2L198.9 27.2L213.9 27.2L228.9 28.2L222.4 30.9L213.9 33.0L202.1 35.2L196.8 39.5L186.1 40.5L178.6 38.4L171.1 35.2Z"/>
<path fill="#2a6a28" stroke-width="1.6" d="M200.0 45.3L209.6 45.3L218.2 49.1L227.8 53.9L223.5 56.6L220.3 60.9L213.9 59.8L207.5 56.6L202.1 57.6L201.1 53.4L204.3 51.2L200.0 49.1Z"/>
<path fill="#2a6a28" stroke-width="1.6" d="M156.1 33.0L169.0 34.6L183.9 34.1L198.9 38.4L196.8 41.1L177.5 40.5L160.4 39.5L157.2 36.3Z"/>
<path fill="#2a6a28" stroke-width="1.6" d="M160.4 42.7L173.3 42.1L189.3 43.2L198.9 45.9L194.6 49.1L180.7 49.1L170.0 47.0L161.5 45.9Z"/>
<path fill="#2a6a28" stroke-width="1.6" d="M180.7 51.2L191.4 50.2L196.8 55.5L189.3 58.7L181.8 56.6Z"/>
<path fill="#2a6a28" stroke-width="1.6" d="M201.0 61.5L210.7 61.5L213.0 65.5L204.0 65.0Z"/>
<path fill="#2a6a28" stroke-width="1.6" d="M127.3 38.7L139.7 36.5L155.9 39.5L154.2 41.7L139.7 40.8L127.7 39.5Z"/>
<path fill="#2a6a28" stroke-width="1.6" d="M122.6 44.7L125.1 41.7L135.4 41.7L149.9 43.8L156.8 45.5L162.8 48.5L158.5 50.7L146.5 50.7L135.4 48.1L124.3 46.4Z"/>
<path fill="none" stroke-width="1.6" d="M174.0 33.0L186.0 31.5L200.0 32.0L212.0 30.0"/>
<path fill="none" stroke-width="1.6" d="M178.0 36.0L192.0 35.5"/>
<path fill="none" stroke-width="1.6" d="M164.0 37.0L182.0 37.5L194.0 39.5"/>
<path fill="none" stroke-width="1.6" d="M166.0 45.0L184.0 46.0L196.0 47.5"/>
<path fill="none" stroke-width="1.6" d="M129.0 45.5L146.0 46.5L158.0 48.5"/>
<path fill="none" stroke-width="1.6" d="M206.0 50.0L216.0 52.5L222.0 56.0"/>
<path fill="none" stroke-width="1.6" d="M186.0 53.5L194.0 55.0"/>
<path fill="none" stroke-width="1.6" d="M159.0 52.0L172.0 53.0L182.0 51.0"/>
<path fill="none" stroke-width="1.6" d="M106.0 51.0L116.0 50.0"/>
<path fill="none" d="M182.9 134.1L182.9 137.2L184.4 137.5"/>
<path fill="none" d="M182.9 137.2L182.1 138.6L181.2 140.0L182.4 141.1"/>
<path fill="none" d="M182.9 139.8L184.5 140.4L185.7 141.6L187.0 140.6L189.8 139.5L192.7 138.6"/>
<path fill="none" d="M188.6 145.2L191.4 145.2L191.9 145.2"/>
<path fill="none" d="M193.2 147.5L193.4 149.9"/>
<path fill="none" d="M235.6 153.4L234.6 154.9L234.0 156.7L234.4 158.3L234.8 159.9"/>
<path fill="none" d="M240.5 153.9L240.0 156.7L239.7 159.4"/>
<path fill="none" d="M206.9 236.9L207.8 238.5L208.6 240.1L207.4 241.6L206.9 243.4L208.1 244.9L208.6 246.7L207.8 249.1L209.7 250.2L211.9 250.8L214.1 251.2L215.9 252.4"/>
<path fill="none" d="M209.4 232.8L207.8 235.2L208.6 237.0L209.7 238.5"/>
<path fill="none" d="M211.0 249.1L212.5 250.2L214.3 250.8L216.4 251.4L218.4 252.4"/>
<path fill="none" d="M314.7 118.5L316.2 119.5L317.6 120.8L319.4 121.4L321.0 122.3L322.4 123.3L324.0 124.1L325.5 124.9L326.7 126.1L328.1 127.1L329.6 127.9L330.9 129.2L332.6 129.9L334.4 130.6L335.9 131.8L338.4 131.3L340.0 130.6L341.5 129.8L342.8 128.6L344.5 128.0L345.6 126.7L347.1 125.8L348.4 124.7L347.0 123.1L346.1 121.2L344.5 119.8L344.5 117.9L344.6 116.0L344.9 114.1L344.2 111.9L342.8 110.0L342.4 108.4L342.7 106.7L342.4 105.1L342.5 103.4"/>
<path fill="none" d="M347.7 109.2L346.3 110.8L345.3 112.8L344.9 114.1"/>
<path fill="none" d="M326.1 105.9L326.5 108.0L326.9 110.0L325.0 110.6L323.2 111.6L321.9 112.7L320.3 113.0L318.9 113.8L317.5 114.7L316.0 115.2L314.7 116.2L314.7 118.5"/>
<path fill="none" d="M348.4 124.7L350.0 125.3L351.8 124.9L353.5 125.5L355.2 126.0L356.8 126.7L358.5 127.2L360.1 127.7L361.7 128.5L363.4 129.1L364.8 130.2L366.6 130.6L368.2 131.3L369.8 130.5L369.5 128.8L369.8 127.2L369.7 125.4L369.8 123.7L369.7 121.9L369.5 120.2L369.4 118.4L369.4 116.7L369.8 114.9L370.3 113.0L369.8 111.1"/>
<path fill="none" d="M369.8 127.2L371.5 127.4L373.3 126.8L375.0 127.4L376.7 127.6L378.4 127.2L380.1 127.2L382.0 126.8L383.8 127.2L385.6 127.1L387.5 126.9L389.3 127.2"/>
<path fill="none" d="M368.2 131.3L368.1 133.4L368.6 135.4L368.2 137.5L366.7 138.6L365.7 140.3L364.9 142.4L366.2 144.9L367.9 146.0L368.8 147.5L369.8 149.0L370.6 150.6L371.8 151.9L373.1 153.1L373.9 154.7L375.7 155.4L377.3 156.1L378.8 157.3L380.7 156.6L382.7 156.9L384.6 156.3L387.0 155.0L387.7 153.5L387.8 151.7L389.4 150.4L391.1 149.3L392.6 148.2L394.4 147.8L396.2 147.1L397.8 146.4L399.3 145.2"/>
<path fill="none" d="M389.3 127.2L389.8 128.8"/>
<path fill="none" d="M383.7 155.8L386.2 154.7L386.5 153.0L387.7 151.7L388.3 150.1L388.7 148.5L388.9 146.7L388.5 144.9L388.4 143.1L388.9 141.3L388.7 139.5L389.3 138.0L390.2 136.5L391.1 135.2L391.9 133.7"/>
<path fill="none" d="M396.0 156.7L394.2 156.4L392.5 155.7L390.6 155.9L388.7 155.7L387.0 155.0L384.6 156.3L382.6 156.6L380.7 156.9L378.8 157.3L378.3 159.2L378.2 161.1L377.9 162.9L378.0 164.8L377.3 166.7L377.5 168.7L377.2 170.6L377.6 172.1L378.3 173.6L378.6 175.2L378.8 176.8L380.8 177.8L382.9 178.8L384.5 180.2L385.4 182.0L386.7 181.7L388.5 182.1L390.3 182.2L391.9 181.6L393.6 181.5L395.2 181.2"/>
<path fill="none" d="M396.0 166.0L396.4 164.1L395.6 162.3L395.6 160.4L396.0 158.5L396.0 156.7L393.9 157.6L392.0 157.6L390.2 156.9L388.2 157.3L386.5 156.3L384.6 156.3"/>
<path fill="none" d="M384.6 164.8L382.9 164.5L381.3 164.6L379.6 164.9L378.0 164.8"/>
<path fill="none" d="M384.6 164.8L386.1 165.6L387.3 166.8L388.8 167.7L390.3 168.6L391.7 169.7L393.1 170.9"/>
<path fill="none" d="M378.0 164.8L379.6 167.3L381.6 166.1L383.7 165.2L384.6 164.8L384.9 163.0L385.4 161.2L385.0 159.4L384.6 157.5L383.7 155.8"/>
<path fill="none" d="M355.1 159.6L352.8 159.2L350.5 159.6L347.4 159.6L344.9 159.4"/>
<path fill="none" d="M350.5 172.9L349.4 171.4L350.9 170.7L352.6 170.6L353.7 169.2L355.1 168.1L355.7 166.3L356.4 164.4L356.8 162.5L357.5 160.7L358.1 158.8L359.2 157.0"/>
<path fill="none" d="M357.5 160.7L355.1 159.6"/>
<path fill="none" d="M368.2 181.2L370.6 182.8L371.6 181.2L373.0 179.9L374.3 178.5L375.6 177.1L377.2 177.4L378.8 176.8"/>
<path fill="none" d="M368.2 184.5L370.6 182.8L372.7 183.2L374.7 182.8L376.7 184.0L378.8 184.5L378.4 186.1L378.4 187.8L378.8 189.4L377.2 189.7L375.6 190.2L373.4 191.2L371.5 192.7L369.8 192.2"/>
<path fill="none" d="M369.8 192.2L371.5 192.7L373.0 194.1L373.9 195.9L375.4 197.8L377.0 199.4"/>
<path fill="none" d="M361.6 199.2L363.3 199.2"/>
<path fill="none" d="M382.9 191.0L382.6 192.9L382.6 194.9L382.1 196.8L381.1 198.3L380.1 199.9"/>
<path fill="none" d="M310.1 142.9L310.1 144.9L310.9 146.8L312.9 145.8L315.0 144.7"/>
<path fill="none" d="M320.1 146.2L322.1 147.0L324.3 147.6L324.4 149.5L324.3 151.3L323.7 153.2L324.0 155.0L323.6 153.4L323.8 151.7L324.2 150.1L324.1 148.5L323.8 146.8L324.2 145.2L326.1 145.3L328.1 145.2L328.7 146.8L329.1 148.5L329.7 150.1L330.3 151.7L330.7 153.4"/>
<path fill="none" d="M325.6 139.5L326.5 141.3L327.4 143.2L328.4 145.0L330.5 144.0L332.7 143.2"/>
<path fill="none" d="M315.8 156.0L315.7 154.0L316.1 152.0L316.6 150.1L316.4 148.2L315.6 146.5L315.0 144.7"/>
<path fill="none" d="M352.6 147.6L350.7 146.8L350.2 148.6L348.7 150.0L348.2 151.7L346.7 152.8L344.9 153.4L344.2 154.8L342.8 155.8"/>
<path fill="none" d="M352.6 153.1L352.7 151.2L352.4 149.4L352.6 147.6"/>
<path fill="none" d="M344.9 159.4L347.4 159.6L347.4 161.3L347.3 163.1L347.4 164.8L349.1 165.9L350.5 167.3L351.5 169.0L352.6 170.6"/>
<path fill="none" d="M444.0 95.3L445.9 96.9L447.7 97.4L449.2 98.5"/>
<path fill="none" d="M439.4 102.3L440.2 100.4L441.0 98.5L442.7 98.0L444.3 97.4L446.0 97.4L447.6 98.1L449.2 98.5"/>
</g></svg>
</div>
<svg style="position:absolute;left:255px;top:80px" width="50" height="120" viewBox="255 80 50 120">
 <g fill="#003f00">
  <rect x="272" y="88" width="16" height="50" rx="8" ry="8"/>
  <rect x="263" y="103.7" width="34" height="17.2" rx="11" ry="8.6"/>
  <rect x="272" y="143" width="16" height="50" rx="8" ry="8"/>
 </g>
 <g fill="#fff">
  <path d="M280 91 L284.8 99.4 H275.2 Z"/>
  <path d="M266.7 112.4 L275.3 107.7 V117.1 Z"/>
  <path d="M293.3 112.4 L284.7 107.7 V117.1 Z"/>
  <path d="M280 134.2 L284.8 125.7 H275.2 Z"/>
  <rect x="275.5" y="151.4" width="9" height="2"/>
  <rect x="279" y="148" width="2" height="9"/>
  <rect x="275.5" y="183" width="9" height="2"/>
 </g>
 <g fill="none" stroke="#8c8cf0" stroke-width="0.8">
  <circle cx="280" cy="168.4" r="7"/>
  <ellipse cx="280" cy="168.4" rx="3.2" ry="7"/>
  <path d="M273.3 166 H286.7 M273.3 171 H286.7 M280 161.4 V175.4"/>
 </g>
</svg>

<svg style="position:absolute;left:0;top:0" width="935" height="876"><g fill="#eea010"><circle cx="292.4" cy="256.5" r="0.9"/><circle cx="345.3" cy="249.4" r="0.9"/><circle cx="325.9" cy="261.8" r="0.9"/><circle cx="331.2" cy="263.5" r="0.9"/><circle cx="287" cy="268.8" r="0.9"/><circle cx="280" cy="261.8" r="0.9"/><circle cx="426.5" cy="235.3" r="0.9"/><circle cx="859.6" cy="230.2" r="0.9"/><circle cx="867.3" cy="261" r="0.9"/><circle cx="848" cy="268.7" r="0.9"/><circle cx="832.6" cy="245.6" r="0.9"/><circle cx="667" cy="268.7" r="0.9"/><circle cx="836" cy="250" r="0.9"/><circle cx="469" cy="181.4" r="0.9"/><circle cx="446" cy="190" r="0.9"/><circle cx="448" cy="192.2" r="0.8"/><circle cx="450.5" cy="193.5" r="0.7"/><circle cx="444.5" cy="188" r="0.7"/><circle cx="474.5" cy="204.5" r="0.8"/><circle cx="476" cy="207.5" r="0.8"/><circle cx="477" cy="210.5" r="0.8"/><circle cx="477.5" cy="213.5" r="0.8"/><circle cx="535.5" cy="208" r="0.9"/><circle cx="534" cy="206.5" r="0.7"/><circle cx="548" cy="188.5" r="0.8"/></g></svg>
<!-- legend -->
<div style="left:257px;top:389px;width:139px;height:19px;background:linear-gradient(90deg,#fff 0%,#c4dfc4 30%,#6fb36f 60%,#1c861c 82%,#003a00 100%)"></div>
<span class="t n12" style="left:256px;top:390px;color:#222">0</span>
<span class="t n12" style="left:345px;top:390px;color:#222">80,708</span>

<div class="hl" style="left:246px;top:417px;width:671px"></div>
<span class="t b13 h10" style="left:265px;top:428px">Report View by Selection</span>
<span class="t b13 blue" style="left:831px;top:428px">Customize</span>
<div class="hl" style="left:246px;top:451px;width:671px"></div>

<!-- table -->
<div style="left:246px;top:452px;width:666px;height:38px;background:#f4f4f4"></div>
<div style="left:246px;top:490px;width:665px;height:100px;background:#f9f9f9"></div>
<div class="hl" style="left:246px;top:510px;width:665px;background:#e6e6e6"></div>
<div class="hl" style="left:246px;top:534px;width:665px;background:#e6e6e6"></div>
<div class="hl" style="left:246px;top:566px;width:665px;background:#e6e6e6"></div>
<div class="hl" style="left:246px;top:590px;width:665px;background:#e6e6e6"></div>

<span class="t b13" style="left:259px;top:456px">Total:</span>
<span class="t b13" style="left:268px;top:471px">4</span>
<span class="t b13" style="left:322px;top:464px">Research Fields</span>
<span class="t b13" style="left:449px;top:456px">Web of Science</span>
<span class="t b13" style="left:457px;top:471px">Documents</span>
<span class="t n13" style="left:583px;top:464px;color:#557799;font-weight:bold">Cites</span>
<svg style="position:absolute;left:619px;top:468px" width="8" height="5"><path d="M0 0 H7 L3.5 4 Z" fill="#6a9ad2"/></svg>
<span class="t b13" style="left:675px;top:464px">Cites/Paper</span>
<span class="t b13" style="left:801px;top:464px">Top Papers</span>

<!-- rows -->
<span class="t n13 num" style="left:260px;width:41px;top:491px">1</span>
<span class="t b13 blue" style="left:323px;top:491px">CHEMISTRY</span>
<span class="t n13 num" style="left:500px;width:52px;top:491px">705</span>
<span class="t n13 num" style="left:600px;width:57px;top:491px">10,476</span>
<span class="t n13 num" style="left:700px;width:66px;top:491px">14.86</span>
<div class="bar" style="top:490px"><b style="width:46px"></b><span style="color:#4c5260">11</span></div>

<span class="t n13 num" style="left:260px;width:41px;top:515px">2</span>
<span class="t b13 blue" style="left:323px;top:515px">ENGINEERING</span>
<span class="t n13 num" style="left:500px;width:52px;top:515px">547</span>
<span class="t n13 num" style="left:600px;width:57px;top:515px">8,258</span>
<span class="t n13 num" style="left:700px;width:66px;top:515px">15.10</span>
<div class="bar" style="top:514px"><b style="width:75px"></b><span style="color:#4c5260">18</span></div>

<span class="t n13 num" style="left:260px;width:41px;top:543px">3</span>
<span class="t b13 blue" style="left:323px;top:537px;line-height:12px">ENVIRONMENT/E<br>COLOGY</span>
<span class="t n13 num" style="left:500px;width:52px;top:543px">150</span>
<span class="t n13 num" style="left:600px;width:57px;top:543px">4,944</span>
<span class="t n13 num" style="left:700px;width:66px;top:543px">32.96</span>
<div class="bar" style="top:542px"><b style="width:92px"></b><span style="color:#fff">22</span></div>

<span class="t n13 num" style="left:260px;width:41px;top:571px">0</span>
<span class="t b13 blue" style="left:323px;top:571px">ALL FIELDS</span>
<span class="t n13 num" style="left:500px;width:52px;top:571px">3,714</span>
<span class="t n13 num" style="left:600px;width:57px;top:571px">45,619</span>
<span class="t n13 num" style="left:700px;width:66px;top:571px">12.28</span>
<div class="bar" style="top:570px"><b style="width:92px"></b><span style="color:#fff">88</span></div>

<!-- footer -->
<span class="t n12" style="left:560px;width:356px;text-align:right;top:842px;font-style:italic;color:#1e2328">InCites Essential Science Indicators dataset updated Jan 12, 2023.</span>
<span class="t n12" style="left:560px;width:356px;text-align:right;top:856px;font-style:italic;color:#1e2328">For more information <span style="position:static;color:#1a5f8e">Click Here</span></span>
</body></html>
